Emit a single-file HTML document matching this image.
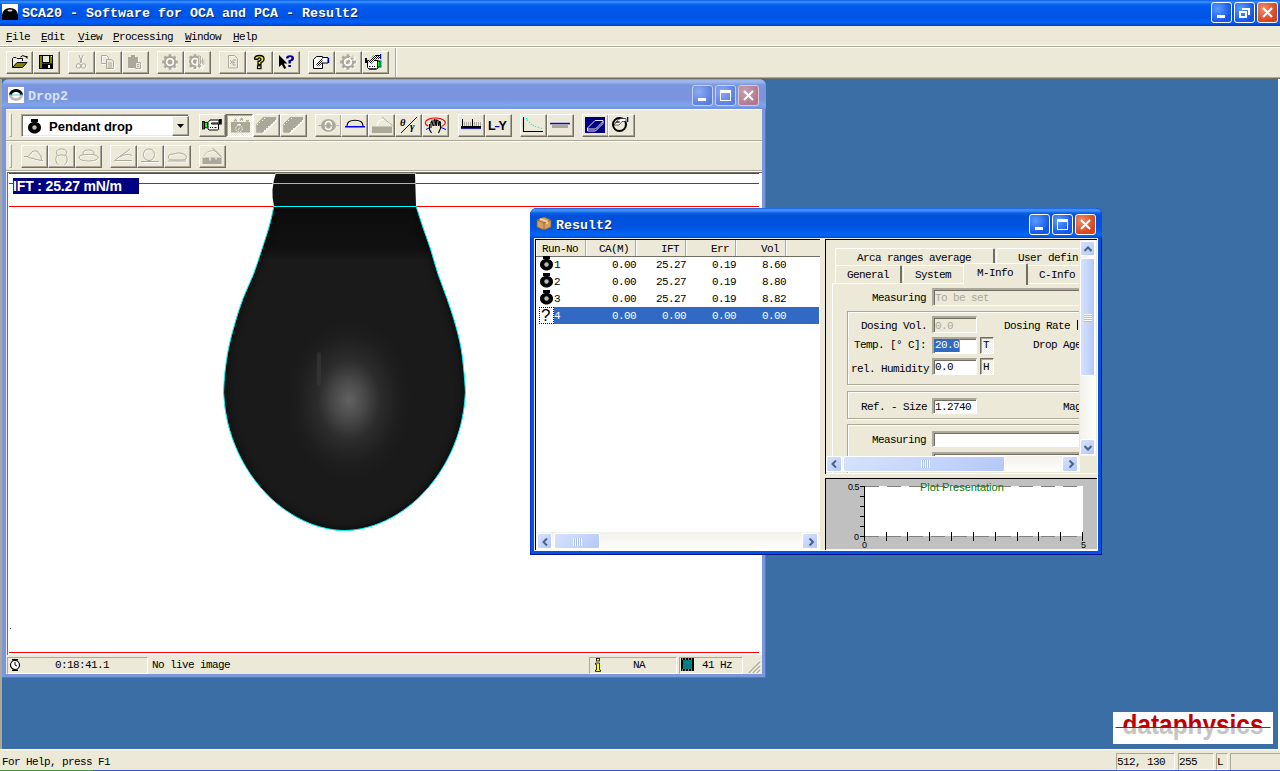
<!DOCTYPE html>
<html><head><meta charset="utf-8">
<style>
*{margin:0;padding:0;box-sizing:border-box}
html,body{width:1280px;height:771px;overflow:hidden;background:#3A6EA5;position:relative;font-family:"Liberation Mono",monospace}
.a{position:absolute}
.mono{font-family:"Liberation Mono",monospace;font-size:11px;letter-spacing:-0.6px;color:#000;white-space:pre}
.sans{font-family:"Liberation Sans",sans-serif}
.btn{position:absolute;width:27px;height:23px;background:#ECE9D8;border-top:1px solid #fff;border-left:1px solid #fff;border-right:1px solid #716F64;border-bottom:1px solid #716F64;box-shadow:inset -1px -1px 0 #ACA899}
.btn svg{position:absolute;left:4px;top:2px}
#title{left:0;top:0;width:1280px;height:26px;background:linear-gradient(#0A5FEA 0px,#3D95FF 2px,#0A64F0 4px,#0058EE 8px,#0054E3 18px,#0062F7 22px,#0050E0 24px,#0040C0 26px)}
.ttext{color:#fff;font-weight:bold;font-size:13.33px;letter-spacing:0;white-space:pre;text-shadow:1px 1px 0 #0A246A}
#menu{left:0;top:26px;width:1280px;height:21px;background:#ECE9D8;border-bottom:1px solid #ACA899;box-shadow:inset 0 -1px 0 #fff}
#tool{left:0;top:47px;width:1280px;height:32px;background:#ECE9D8;border-top:1px solid #fff;border-bottom:1px solid #716F64;box-shadow:inset 0 -1px 0 #ACA899}
.xsb{border:1px solid #fff;border-radius:2px;background:linear-gradient(135deg,#D6E2FC,#C3D4FA 60%,#B4C8F7)}
.wbtn{position:absolute;width:21px;height:21px;border:1px solid #fff;border-radius:3px}
</style></head><body>

<!-- MDI left edge -->
<div class="a" style="left:0;top:79px;width:2px;height:670px;background:#ACA899"></div>

<!-- Main title bar -->
<div id="title" class="a">
  <svg class="a" style="left:2px;top:4px" width="16" height="16" viewBox="0 0 16 16"><rect width="16" height="16" fill="#fff"/><path d="M0 16 L0 11 Q1 4 8 4 Q15 4 16 11 L16 16Z" fill="#000"/><ellipse cx="8" cy="6.5" rx="2.5" ry="1" fill="#ddd"/></svg>
  <div class="a ttext" style="left:22px;top:6px;line-height:16px">SCA20 - Software for OCA and PCA - Result2</div>
  <div class="wbtn" style="left:1211px;top:2px;background:radial-gradient(circle at 30% 30%,#5A9CFF,#1656E6 70%)"><div class="a" style="left:5px;top:12px;width:8px;height:3px;background:#fff"></div></div>
  <div class="wbtn" style="left:1234px;top:2px;background:radial-gradient(circle at 30% 30%,#5A9CFF,#1656E6 70%)"><div class="a" style="left:4px;top:8px;width:8px;height:7px;border:2px solid #fff;border-top-width:2px"></div><div class="a" style="left:7px;top:5px;width:8px;height:7px;border-top:2px solid #fff;border-right:2px solid #fff"></div></div>
  <div class="wbtn" style="left:1257px;top:2px;background:radial-gradient(circle at 30% 30%,#F08A6A,#D8451B 70%)"><svg class="a" style="left:3px;top:3px" width="13" height="13"><path d="M2 2 L11 11 M11 2 L2 11" stroke="#fff" stroke-width="2"/></svg></div>
</div>

<!-- Menu -->
<div id="menu" class="a">
  <div class="a mono" style="left:6px;top:4px;line-height:14px"><u>F</u>ile</div>
  <div class="a mono" style="left:41px;top:4px;line-height:14px"><u>E</u>dit</div>
  <div class="a mono" style="left:78px;top:4px;line-height:14px"><u>V</u>iew</div>
  <div class="a mono" style="left:113px;top:4px;line-height:14px"><u>P</u>rocessing</div>
  <div class="a mono" style="left:185px;top:4px;line-height:14px"><u>W</u>indow</div>
  <div class="a mono" style="left:233px;top:4px;line-height:14px"><u>H</u>elp</div>
</div>

<!-- Toolbar -->
<div id="tool" class="a">
  <div class="btn" style="left:6px;top:3px"></div>
  <div class="btn" style="left:33px;top:3px"></div>
  <div class="btn" style="left:68px;top:3px"><svg width="16" height="16" viewBox="0 0 16 16"><g transform="translate(1 1)" fill="#fff" stroke="#fff"><path d="M6 1 L9 9 M10 1 L7 9" fill="none" stroke-width="1"/><circle cx="5.5" cy="12" r="2.3" fill="none" stroke-width="1"/><circle cx="10.5" cy="12" r="2.3" fill="none" stroke-width="1"/></g><g fill="#ACA899" stroke="#ACA899"><path d="M6 1 L9 9 M10 1 L7 9" fill="none" stroke-width="1"/><circle cx="5.5" cy="12" r="2.3" fill="none" stroke-width="1"/><circle cx="10.5" cy="12" r="2.3" fill="none" stroke-width="1"/></g></svg></div>
  <div class="btn" style="left:95px;top:3px"><svg width="16" height="16" viewBox="0 0 16 16"><g transform="translate(1 1)" fill="#fff" stroke="#fff"><path d="M1.5 1.5 h5 l2 2 v6 h-7z" fill="none" stroke-width="1"/><path d="M6.5 5.5 h5 l2 2 v7 h-7z" fill="#ECE9D8" stroke-width="1"/><path d="M8 9h4M8 11h4M8 13h4" stroke-width="1"/></g><g fill="#ACA899" stroke="#ACA899"><path d="M1.5 1.5 h5 l2 2 v6 h-7z" fill="none" stroke-width="1"/><path d="M6.5 5.5 h5 l2 2 v7 h-7z" fill="#ECE9D8" stroke-width="1"/><path d="M8 9h4M8 11h4M8 13h4" stroke-width="1"/></g></svg></div>
  <div class="btn" style="left:122px;top:3px"><svg width="16" height="16" viewBox="0 0 16 16"><g transform="translate(1 1)" fill="#fff" stroke="#fff"><path d="M1 3 h10 v11 h-10z" stroke="none"/><rect x="4" y="1" width="4" height="2" stroke="none"/><path d="M8.5 8.5 h5 v6 h-5z" fill="#ECE9D8" stroke-width="1"/><path d="M10 10.5h2M10 12.5h2" stroke-width="1"/></g><g fill="#ACA899" stroke="#ACA899"><path d="M1 3 h10 v11 h-10z" stroke="none"/><rect x="4" y="1" width="4" height="2" stroke="none"/><path d="M8.5 8.5 h5 v6 h-5z" fill="#ECE9D8" stroke-width="1"/><path d="M10 10.5h2M10 12.5h2" stroke-width="1"/></g></svg></div>
  <div class="btn" style="left:157px;top:3px"><svg width="16" height="16" viewBox="0 0 16 16"><path d="M13.84 5.92 L14.03 6.55 L15.86 6.50 L15.86 9.50 L14.03 9.45 L13.84 10.08 L13.60 10.66 L13.29 11.24 L14.62 12.50 L12.50 14.62 L11.24 13.29 L10.66 13.60 L10.08 13.84 L9.45 14.03 L9.50 15.86 L6.50 15.86 L6.55 14.03 L5.92 13.84 L5.34 13.60 L4.76 13.29 L3.50 14.62 L1.38 12.50 L2.71 11.24 L2.40 10.66 L2.16 10.08 L1.97 9.45 L0.14 9.50 L0.14 6.50 L1.97 6.55 L2.16 5.92 L2.40 5.34 L2.71 4.76 L1.38 3.50 L3.50 1.38 L4.76 2.71 L5.34 2.40 L5.92 2.16 L6.55 1.97 L6.50 0.14 L9.50 0.14 L9.45 1.97 L10.08 2.16 L10.66 2.40 L11.24 2.71 L12.50 1.38 L14.62 3.50 L13.29 4.76 L13.60 5.34Z" fill="#fff" transform="translate(0.8 0.8)"/><path d="M13.84 5.92 L14.03 6.55 L15.86 6.50 L15.86 9.50 L14.03 9.45 L13.84 10.08 L13.60 10.66 L13.29 11.24 L14.62 12.50 L12.50 14.62 L11.24 13.29 L10.66 13.60 L10.08 13.84 L9.45 14.03 L9.50 15.86 L6.50 15.86 L6.55 14.03 L5.92 13.84 L5.34 13.60 L4.76 13.29 L3.50 14.62 L1.38 12.50 L2.71 11.24 L2.40 10.66 L2.16 10.08 L1.97 9.45 L0.14 9.50 L0.14 6.50 L1.97 6.55 L2.16 5.92 L2.40 5.34 L2.71 4.76 L1.38 3.50 L3.50 1.38 L4.76 2.71 L5.34 2.40 L5.92 2.16 L6.55 1.97 L6.50 0.14 L9.50 0.14 L9.45 1.97 L10.08 2.16 L10.66 2.40 L11.24 2.71 L12.50 1.38 L14.62 3.50 L13.29 4.76 L13.60 5.34Z" fill="#ACA899"/><circle cx="8" cy="8" r="3.3" fill="none" stroke="#fff" stroke-width="1.6"/></svg></div>
  <div class="btn" style="left:184px;top:3px"><svg width="16" height="16" viewBox="0 0 16 16"><g transform="translate(-1.5 0) scale(0.95)"><path d="M13.84 5.92 L14.03 6.55 L15.86 6.50 L15.86 9.50 L14.03 9.45 L13.84 10.08 L13.60 10.66 L13.29 11.24 L14.62 12.50 L12.50 14.62 L11.24 13.29 L10.66 13.60 L10.08 13.84 L9.45 14.03 L9.50 15.86 L6.50 15.86 L6.55 14.03 L5.92 13.84 L5.34 13.60 L4.76 13.29 L3.50 14.62 L1.38 12.50 L2.71 11.24 L2.40 10.66 L2.16 10.08 L1.97 9.45 L0.14 9.50 L0.14 6.50 L1.97 6.55 L2.16 5.92 L2.40 5.34 L2.71 4.76 L1.38 3.50 L3.50 1.38 L4.76 2.71 L5.34 2.40 L5.92 2.16 L6.55 1.97 L6.50 0.14 L9.50 0.14 L9.45 1.97 L10.08 2.16 L10.66 2.40 L11.24 2.71 L12.50 1.38 L14.62 3.50 L13.29 4.76 L13.60 5.34Z" fill="#fff" transform="translate(0.8 0.8)"/><path d="M13.84 5.92 L14.03 6.55 L15.86 6.50 L15.86 9.50 L14.03 9.45 L13.84 10.08 L13.60 10.66 L13.29 11.24 L14.62 12.50 L12.50 14.62 L11.24 13.29 L10.66 13.60 L10.08 13.84 L9.45 14.03 L9.50 15.86 L6.50 15.86 L6.55 14.03 L5.92 13.84 L5.34 13.60 L4.76 13.29 L3.50 14.62 L1.38 12.50 L2.71 11.24 L2.40 10.66 L2.16 10.08 L1.97 9.45 L0.14 9.50 L0.14 6.50 L1.97 6.55 L2.16 5.92 L2.40 5.34 L2.71 4.76 L1.38 3.50 L3.50 1.38 L4.76 2.71 L5.34 2.40 L5.92 2.16 L6.55 1.97 L6.50 0.14 L9.50 0.14 L9.45 1.97 L10.08 2.16 L10.66 2.40 L11.24 2.71 L12.50 1.38 L14.62 3.50 L13.29 4.76 L13.60 5.34Z" fill="#ACA899"/><circle cx="8" cy="8" r="3.3" fill="none" stroke="#fff" stroke-width="1.6"/></g><path d="M8 15 L8 7 M10 10 L10 2 M12 10 L12 2.5 M14 10 L14 4 M15.5 11 L15.5 6 M15.5 11 L13 16" fill="none" stroke="#fff" stroke-width="1.1"/><path d="M9.5 10 L9.5 1.5 M11.5 10 L11.5 2 M13.5 10 L13.5 3.5 M15 11 L15 5.5" fill="none" stroke="#ACA899" stroke-width="0.9"/></svg></div>
  <div class="btn" style="left:219px;top:3px"><svg width="16" height="16" viewBox="0 0 16 16"><path d="M4.5 1.5 h6 l3 3 v9.5 h-9z" fill="none" stroke="#fff" stroke-width="1" transform="translate(0.7 0.7)"/><path d="M4.5 1.5 h6 l3 3 v9.5 h-9z" fill="none" stroke="#ACA899" stroke-width="1"/><path d="M6 6 L8 8 L6 10 M12 6 h-3 v5 h3 M9 8.5h2" fill="none" stroke="#ACA899" stroke-width="1"/></svg></div>
  <div class="btn" style="left:246px;top:3px"><svg width="16" height="16" viewBox="0 0 16 16"><path d="M3.5 5 Q3.5 1.5 8.5 1.5 Q13 1.5 13 5 Q13 7.5 10 8.5 L10 10.5 L7 10.5 L7 7.5 Q10 6.8 10 5 Q10 3.8 8.5 3.8 Q6.8 3.8 6.8 5.5 Z" fill="#FFFF00" stroke="#000" stroke-width="1.3" stroke-linejoin="round"/><rect x="6.5" y="11.8" width="3.5" height="2.8" fill="#FFFF00" stroke="#000" stroke-width="1.2"/></svg></div>
  <div class="btn" style="left:273px;top:3px"><svg width="16" height="16" viewBox="0 0 16 16"><path d="M1 1 L1 13 L3.8 10.5 L6.2 15 L8.2 14 L5.8 9.6 L9.3 9.6 Z" fill="#000"/><path d="M8 4.5 Q8 1.2 12 1.2 Q16 1.2 16 4.2 Q16 6.8 12.8 7.5 L12.8 9.5 L10.5 9.5 L10.5 6.3 Q13.6 5.8 13.6 4.2 Q13.6 3 12 3 Q10.5 3 10.4 4.5 Z" fill="#000090"/><rect x="10.3" y="11" width="2.6" height="2" fill="#000090"/></svg></div>
  <div class="btn" style="left:308px;top:3px"></div>
  <div class="btn" style="left:335px;top:3px"></div>
  <div class="btn" style="left:362px;top:3px"></div>
  <div class="a" style="left:395px;top:0;width:2px;height:29px;background:#ACA899;border-right:1px solid #fff"></div>
</div>


<svg class="a" style="left:0;top:44px" width="400" height="34" viewBox="0 44 400 34"><defs><pattern id="chk" width="2" height="2" patternUnits="userSpaceOnUse"><rect width="2" height="2" fill="#fff"/><rect width="1" height="1" fill="#000"/><rect x="1" y="1" width="1" height="1" fill="#000"/></pattern><pattern id="chky" width="2" height="2" patternUnits="userSpaceOnUse"><rect width="2" height="2" fill="#FFFF00"/><rect width="1" height="1" fill="#fff"/><rect x="1" y="1" width="1" height="1" fill="#fff"/></pattern></defs><path d="M12.5 67.5 V58.5 L13.5 57.5 H16 L17 58.5 H22.5 V61" fill="url(#chky)" stroke="#000" stroke-width="1"/><path d="M12.5 67.5 L17 62.5 H27 L22.5 67.5 Z" fill="#808000" stroke="#000" stroke-width="1"/><path d="M20.5 57 Q22.5 54.5 25.5 56.5" fill="none" stroke="#000" stroke-width="1"/><path d="M24.5 56 H27.5 V59Z" fill="#000"/><rect x="39.5" y="55.5" width="13" height="13" fill="#808000" stroke="#000" stroke-width="1"/><rect x="42.5" y="55.5" width="7" height="7" fill="#ECE9D8" stroke="#000" stroke-width="1"/><rect x="42" y="63.5" width="10" height="5" fill="#000"/><rect x="48" y="65" width="2" height="3" fill="#fff"/><rect x="51" y="56" width="1" height="1" fill="#fff"/><path d="M313.5 68.5 V59.5 L316.5 56.5 H322.5 V68.5Z" fill="#fff" stroke="#000" stroke-width="1"/><path d="M316 64.5 L321 58.5 L322.5 57.5 H328 V63 H322.5 L318.5 66.5Z" fill="url(#chk)" stroke="none"/><path d="M322.5 57.5 H328 V63 H322.5" fill="#fff" stroke="#000" stroke-width="1"/><rect x="328" y="58" width="1.2" height="5" fill="#0000C0"/><g transform="translate(340 54)"><path d="M13.84 5.92 L14.03 6.55 L15.86 6.50 L15.86 9.50 L14.03 9.45 L13.84 10.08 L13.60 10.66 L13.29 11.24 L14.62 12.50 L12.50 14.62 L11.24 13.29 L10.66 13.60 L10.08 13.84 L9.45 14.03 L9.50 15.86 L6.50 15.86 L6.55 14.03 L5.92 13.84 L5.34 13.60 L4.76 13.29 L3.50 14.62 L1.38 12.50 L2.71 11.24 L2.40 10.66 L2.16 10.08 L1.97 9.45 L0.14 9.50 L0.14 6.50 L1.97 6.55 L2.16 5.92 L2.40 5.34 L2.71 4.76 L1.38 3.50 L3.50 1.38 L4.76 2.71 L5.34 2.40 L5.92 2.16 L6.55 1.97 L6.50 0.14 L9.50 0.14 L9.45 1.97 L10.08 2.16 L10.66 2.40 L11.24 2.71 L12.50 1.38 L14.62 3.50 L13.29 4.76 L13.60 5.34Z" fill="#fff" transform="translate(0.8 0.8)"/><path d="M13.84 5.92 L14.03 6.55 L15.86 6.50 L15.86 9.50 L14.03 9.45 L13.84 10.08 L13.60 10.66 L13.29 11.24 L14.62 12.50 L12.50 14.62 L11.24 13.29 L10.66 13.60 L10.08 13.84 L9.45 14.03 L9.50 15.86 L6.50 15.86 L6.55 14.03 L5.92 13.84 L5.34 13.60 L4.76 13.29 L3.50 14.62 L1.38 12.50 L2.71 11.24 L2.40 10.66 L2.16 10.08 L1.97 9.45 L0.14 9.50 L0.14 6.50 L1.97 6.55 L2.16 5.92 L2.40 5.34 L2.71 4.76 L1.38 3.50 L3.50 1.38 L4.76 2.71 L5.34 2.40 L5.92 2.16 L6.55 1.97 L6.50 0.14 L9.50 0.14 L9.45 1.97 L10.08 2.16 L10.66 2.40 L11.24 2.71 L12.50 1.38 L14.62 3.50 L13.29 4.76 L13.60 5.34Z" fill="#ACA899"/><circle cx="8" cy="8" r="3.3" fill="none" stroke="#fff" stroke-width="1.6"/><path d="M4 10 L9 4 L11 3 H15 V6 H12 L8 11" fill="none" stroke="#fff" stroke-width="0.9"/></g><path d="M367.5 60.5 H378 V68 L377 69 H369 L367.5 67.5Z" fill="#fff" stroke="#000" stroke-width="1"/><rect x="365" y="58" width="2" height="5" fill="#000"/><rect x="377.5" y="61" width="2.5" height="6" fill="#00FF00" stroke="#000" stroke-width="0.8"/><rect x="380" y="60.5" width="1.5" height="7" fill="#008080"/><path d="M368 62 L373 56 L375 55 H380 V59 H376 L371 64Z" fill="url(#chk)"/><path d="M375 55.5 H380" stroke="#000"/><rect x="380" y="54" width="1.2" height="5" fill="#0000C0"/><rect x="369" y="66" width="1.5" height="1" fill="#0000C0"/><rect x="372" y="66" width="1" height="1" fill="#000"/><rect x="374" y="66" width="1" height="1" fill="#000"/><rect x="369" y="68.5" width="7" height="1" fill="#000"/></svg>
<!-- Drop2 window -->
<div class="a" id="drop2" style="left:2px;top:79px;width:764px;height:599px;background:#7A96DF;border-radius:7px 7px 0 0;box-shadow:inset -1px -1px 0 #5A6FD0">
  <div class="a" style="left:0;top:0;width:764px;height:30px;border-radius:7px 7px 0 0;background:linear-gradient(#6B8DE0 0px,#9DB6EC 1px,#9DB6EC 3px,#7A96DF 6px,#7A93DF 20px,#7EA6E9 26px,#7190E0 30px)"></div>
  <svg class="a" style="left:6px;top:8px" width="16" height="16" viewBox="0 0 16 16"><rect width="16" height="16" fill="#fff"/><path d="M1 8 A7 6 0 0 1 15 8 L12 8 A4 3 0 0 0 4 8Z" fill="#000"/><path d="M1 8 A7 6 0 0 0 15 8 L12 8 A4 3 0 0 1 4 8Z" fill="#bbb"/><rect x="1" y="7.5" width="14" height="1" fill="#5cc"/></svg>
  <div class="a ttext" style="left:26px;top:10px;line-height:16px;color:#D8E4F8;text-shadow:none">Drop2</div>
  <div class="wbtn" style="left:690px;top:6px;border-color:#C6D3F7;background:radial-gradient(circle at 30% 30%,#8CAAF0,#5A7EE0 75%)"><div class="a" style="left:5px;top:12px;width:8px;height:3px;background:#fff"></div></div>
  <div class="wbtn" style="left:713px;top:6px;border-color:#C6D3F7;background:radial-gradient(circle at 30% 30%,#8CAAF0,#5A7EE0 75%)"><div class="a" style="left:4px;top:4px;width:11px;height:11px;border:1px solid #fff;border-top:3px solid #fff"></div></div>
  <div class="wbtn" style="left:736px;top:6px;border-color:#E0C8D0;background:radial-gradient(circle at 30% 30%,#C8A0B0,#B07890 75%)"><svg class="a" style="left:3px;top:3px" width="13" height="13"><path d="M2 2 L11 11 M11 2 L2 11" stroke="#fff" stroke-width="2"/></svg></div>
  <!-- client -->
  <div class="a" style="left:4px;top:30px;width:756px;height:565px;background:#ECE9D8">
    <!-- toolbar band 1 -->
    <div class="a" style="left:0;top:0;width:756px;height:1px;background:#fff"></div>
    <div class="a" style="left:3px;top:4px;width:3px;height:24px;border-left:1px solid #fff;border-top:1px solid #fff;border-right:1px solid #ACA899;border-bottom:1px solid #ACA899"></div>
    <div class="a" style="left:0;top:31px;width:756px;height:1px;background:#ACA899;border-bottom:1px solid #fff;box-sizing:content-box"></div>
    <div class="a" style="left:3px;top:35px;width:3px;height:24px;border-left:1px solid #fff;border-top:1px solid #fff;border-right:1px solid #ACA899;border-bottom:1px solid #ACA899"></div>
    <div class="a" style="left:0;top:61px;width:756px;height:1px;background:#ACA899;border-bottom:1px solid #fff;box-sizing:content-box"></div>
    <!-- image area -->
    <div class="a" style="left:1px;top:63px;width:755px;height:483px;background:#fff;border-left:1px solid #716F64;border-top:1px solid #716F64;overflow:hidden" id="img">
    </div>
  </div>
</div>



<!-- Drop2 toolbars -->
<div class="a" style="left:21px;top:114px;width:168px;height:23px;background:#fff;border-top:1px solid #ACA899;border-left:1px solid #ACA899;border-right:1px solid #fff;border-bottom:1px solid #fff;box-shadow:inset 1px 1px 0 #716F64,inset -1px -1px 0 #ECE9D8"></div><svg class="a" style="left:28px;top:119px" width="13" height="15" viewBox="0 0 13 15"><rect x="3" y="0" width="7" height="3" fill="#000"/><path d="M6.5 3 C2 3 0 5.5 0 8.5 C0 12 3 14.5 6.5 14.5 C10 14.5 13 12 13 8.5 C13 5.5 11 3 6.5 3Z" fill="#000"/><circle cx="6.5" cy="8.5" r="2.2" fill="#bbb"/></svg><div class="a sans" style="left:49px;top:119px;font-size:13px;font-weight:bold;line-height:16px;color:#000">Pendant drop</div><div class="btn" style="left:172px;top:116px;width:17px;height:20px"><svg style="left:4px;top:7px" width="8" height="5" viewBox="0 0 8 5"><path d="M0 0 h7 L3.5 4z" fill="#000"/></svg></div><div class="btn" style="left:199px;top:114px"></div><div class="btn" style="left:226px;top:114px;border-top:1px solid #716F64;border-left:1px solid #716F64;border-right:1px solid #fff;border-bottom:1px solid #fff;box-shadow:inset 1px 1px 0 #ACA899;background:repeating-conic-gradient(#fff 0 25%,#ECE9D8 0 50%) 0 0/2px 2px"></div><div class="btn" style="left:253px;top:114px"></div><div class="btn" style="left:280px;top:114px"></div><div class="btn" style="left:315px;top:114px"></div><div class="btn" style="left:341px;top:114px"></div><div class="btn" style="left:368px;top:114px"></div><div class="btn" style="left:395px;top:114px"></div><div class="btn" style="left:422px;top:114px"></div><div class="btn" style="left:458px;top:114px"></div><div class="btn" style="left:485px;top:114px"></div><div class="btn" style="left:520px;top:114px"></div><div class="btn" style="left:547px;top:114px"></div><div class="btn" style="left:582px;top:114px"></div><div class="btn" style="left:608px;top:114px"></div><div class="btn" style="left:21px;top:145px"></div><div class="btn" style="left:48px;top:145px"></div><div class="btn" style="left:75px;top:145px"></div><div class="btn" style="left:110px;top:145px"></div><div class="btn" style="left:137px;top:145px"></div><div class="btn" style="left:164px;top:145px"></div><div class="btn" style="left:199px;top:145px"></div>
<svg class="a" style="left:310px;top:112px" width="330" height="26" viewBox="310 112 330 26"><path d="M318.5 125.5 h3 M335.5 125.5 h3" stroke="#ACA899"/><ellipse cx="329" cy="126" rx="7.5" ry="6.5" fill="#fff"/><ellipse cx="328.5" cy="125.5" rx="7.5" ry="6.5" fill="#ACA899"/><rect x="325.5" y="121.5" width="6" height="8" rx="3" fill="none" stroke="#fff" stroke-width="1.4"/><rect x="325" y="125" width="7" height="1.3" fill="#ACA899"/><path d="M347 126 C347 122 350.5 120.3 355 120.3 C359.5 120.3 363 122 363 126" fill="none" stroke="#000" stroke-width="1.1"/><rect x="345" y="126" width="20" height="1.5" fill="#0000FF"/><rect x="372" y="126.5" width="20" height="6.5" fill="#ACA899"/><path d="M377 126 C377 122 380 119.5 383.5 119.5 C387 119.5 389.5 122 389.5 126" fill="none" stroke="#fff" stroke-width="1.1"/><path d="M382 117 L392.5 125.5" stroke="#ACA899" stroke-width="1"/><text x="400" y="125.5" font-family="Liberation Serif" font-style="italic" font-weight="bold" font-size="10.5" fill="#000">&#952;</text><text x="410" y="130" font-family="Liberation Serif" font-style="italic" font-weight="bold" font-size="11" fill="#000">&#947;</text><path d="M401 133 L417 117" stroke="#000080" stroke-width="1"/><path d="M428 126 A10 4.8 0 1 1 441.5 126.5" fill="none" stroke="#F00" stroke-width="1.1"/><path d="M426 129.5 L429 128 M441 127.5 L446 129.5" stroke="#00F" stroke-width="1"/><path d="M429.5 124 L429.5 129.5 L431.5 133 M431 128 L431 122.5 L432 121 L433 126 M434 126 L434 120 L435 119.5 L436 126 M436.5 126 L436.5 120 L438 120.5 L438.5 126 M439 126 L439.5 121.5 L440.5 122 L440.5 128.5 L438.5 133" fill="none" stroke="#000" stroke-width="1.1"/><rect x="461" y="126" width="20" height="2.2" fill="#000"/><rect x="461" y="128.2" width="20" height="0.9" fill="#000080"/><rect x="462" y="119" width="1" height="7" fill="#000"/><rect x="472" y="119" width="1" height="7" fill="#000"/><rect x="464" y="122" width="1" height="4" fill="#ACA899"/><rect x="466" y="122" width="1" height="4" fill="#ACA899"/><rect x="468" y="122" width="1" height="4" fill="#ACA899"/><rect x="470" y="122" width="1" height="4" fill="#ACA899"/><rect x="474" y="122" width="1" height="4" fill="#ACA899"/><rect x="476" y="122" width="1" height="4" fill="#ACA899"/><rect x="478" y="122" width="1" height="4" fill="#ACA899"/><rect x="480" y="122" width="1" height="4" fill="#ACA899"/><text x="488" y="130" font-family="Liberation Sans" font-weight="bold" font-size="12.5" fill="#000">L</text><rect x="495" y="126" width="4.5" height="1.2" fill="#0000C0"/><text x="498.5" y="130" font-family="Liberation Sans" font-weight="bold" font-size="12.5" fill="#000">Y</text><path d="M523.5 117 V131.5 H543" fill="none" stroke="#000" stroke-width="1.1"/><rect x="525.9" y="117.9" width="1.2" height="1.2" fill="#00FFFF"/><rect x="526.9" y="119.9" width="1.2" height="1.2" fill="#00FFFF"/><rect x="528.9" y="121.9" width="1.2" height="1.2" fill="#00FFFF"/><rect x="530.9" y="123.9" width="1.2" height="1.2" fill="#00FFFF"/><rect x="532.9" y="124.9" width="1.2" height="1.2" fill="#00FFFF"/><rect x="534.9" y="125.9" width="1.2" height="1.2" fill="#00FFFF"/><rect x="537.9" y="126.9" width="1.2" height="1.2" fill="#00FFFF"/><rect x="540.9" y="127.9" width="1.2" height="1.2" fill="#00FFFF"/><rect x="550" y="122.8" width="20" height="1.5" fill="#0000FF"/><rect x="552" y="124.5" width="16" height="3.5" fill="#ACA899"/><rect x="585" y="117" width="20" height="16" fill="#000080"/><path d="M587.5 128 L595 120.5 H603 V121.5 L595.5 129 H587.5Z M587.5 128 V131 H595.5 L603 123.5 V121.5" fill="none" stroke="#FFF" stroke-width="0.9"/><circle cx="619.5" cy="124.5" r="6.5" fill="none" stroke="#000" stroke-width="2"/><path d="M614 125 L618.5 119.5 L621 118.5 H626 V121.5 H622 L619 125Z" fill="#fff" stroke="#000" stroke-width="0.6"/><path d="M615.5 122 l1 1 l1 -1 l1 1 l1 -1 M616.5 121 l1 1 l1 -1 l1 1" stroke="#000" stroke-width="0.8" fill="none"/><rect x="627" y="117" width="1.3" height="5" fill="#0000C0"/></svg>
<svg class="a" style="left:197px;top:112px" width="112" height="26" viewBox="197 112 112 26"><rect x="202.5" y="121.5" width="2" height="7.5" fill="#008080" stroke="#000" stroke-width="0.8"/><rect x="204.5" y="122.3" width="3" height="5.5" fill="#00FF00" stroke="#000" stroke-width="0.8"/><path d="M208 122.5 L210 120 H219 V123 H211.5 L211.5 124 H218.5 V129.5 L217.5 130 H209 L208 129 Z" fill="#fff" stroke="#000" stroke-width="1"/><rect x="219" y="119" width="2.8" height="5.5" fill="#000"/><rect x="210" y="127" width="1" height="1" fill="#000"/><rect x="212" y="127" width="1" height="1" fill="#000"/><rect x="214.5" y="127" width="2" height="1" fill="#000080"/><path d="M231 122 H250 V132.5 H231Z" fill="#ACA899"/><path d="M234 121.5 L235.5 119.5 L237 121.5 M240 120.5 L241.5 118.5 L243 120.5 M246 120 L247.5 121.5 L249 120" stroke="#ACA899" stroke-width="1.3" fill="none"/><circle cx="239" cy="128.5" r="3.3" fill="none" stroke="#fff" stroke-width="1" stroke-dasharray="1.5 1"/><rect x="237.5" y="124" width="3.5" height="1.3" fill="#fff"/><path d="M238 130 L240 127.5" stroke="#fff" stroke-width="0.8"/><path d="M263.0 133.5 L276.5 120.5" stroke="#fff" stroke-width="1.2"/><path d="M256.2 124.2 L263.2 117.0 L276.0 117.0 L276.0 120.2 L262.5 132.8 L256.2 132.8Z" fill="#ACA899"/><rect x="257" y="124" width="1" height="1" fill="#fff"/><rect x="259" y="122" width="1" height="1" fill="#fff"/><rect x="262" y="120" width="1" height="1" fill="#fff"/><rect x="264" y="118" width="1" height="1" fill="#fff"/><rect x="264" y="130" width="1" height="1" fill="#fff"/><rect x="266" y="128" width="1" height="1" fill="#fff"/><rect x="268" y="126" width="1" height="1" fill="#fff"/><rect x="271" y="124" width="1" height="1" fill="#fff"/><rect x="273" y="122" width="1" height="1" fill="#fff"/><rect x="275" y="120" width="1" height="1" fill="#fff"/><path d="M290.0 133.5 L303.5 120.5" stroke="#fff" stroke-width="1.2"/><path d="M283.2 124.2 L290.2 117.0 L303.0 117.0 L303.0 120.2 L289.5 132.8 L283.2 132.8Z" fill="#ACA899"/><rect x="284" y="124" width="1" height="1" fill="#fff"/><rect x="286" y="122" width="1" height="1" fill="#fff"/><rect x="288" y="120" width="1" height="1" fill="#fff"/><rect x="291" y="118" width="1" height="1" fill="#fff"/><rect x="291" y="130" width="1" height="1" fill="#fff"/><rect x="293" y="128" width="1" height="1" fill="#fff"/><rect x="296" y="126" width="1" height="1" fill="#fff"/><rect x="298" y="124" width="1" height="1" fill="#fff"/><rect x="300" y="122" width="1" height="1" fill="#fff"/><rect x="302" y="120" width="1" height="1" fill="#fff"/></svg>
<svg class="a" style="left:18px;top:142px" width="212" height="28" viewBox="18 142 212 28"><path d="M24 156.5 H28 L33 151 H37 L41 156 L41.5 160.5 H43 M28 157 L30 158 L33 158.5 L36 159.5 L39 160 L41 160.5" fill="none" stroke="#fff" stroke-width="1" transform="translate(0.8 0.8)"/><path d="M24 156.5 H28 L33 151 H37 L41 156 L41.5 160.5 H43 M28 157 L30 158 L33 158.5 L36 159.5 L39 160 L41 160.5" fill="none" stroke="#ACA899" stroke-width="1"/><path d="M57.5 155 C55 152 57 149 61.5 149 C66 149 68 152 65.5 155 M57.5 155 C54.5 158 56 164 58.5 164.5 M65.5 155 C68.5 158 67 164 64.5 164.5 M58 156 C60 154.5 63 154.5 65 156" fill="none" stroke="#fff" stroke-width="1" transform="translate(0.8 0.8)"/><path d="M57.5 155 C55 152 57 149 61.5 149 C66 149 68 152 65.5 155 M57.5 155 C54.5 158 56 164 58.5 164.5 M65.5 155 C68.5 158 67 164 64.5 164.5 M58 156 C60 154.5 63 154.5 65 156" fill="none" stroke="#ACA899" stroke-width="1"/><path d="M83.5 154.5 C82 151 85 150 88.5 150 C92 150 95 151 93.5 154.5 M79 157.5 C79 155 84 154.5 88.5 154.5 C93 154.5 98 155 98 157.5 C98 160 93 161 88.5 161 C84 161 79 160 79 157.5Z" fill="none" stroke="#fff" stroke-width="1" transform="translate(0.8 0.8)"/><path d="M83.5 154.5 C82 151 85 150 88.5 150 C92 150 95 151 93.5 154.5 M79 157.5 C79 155 84 154.5 88.5 154.5 C93 154.5 98 155 98 157.5 C98 160 93 161 88.5 161 C84 161 79 160 79 157.5Z" fill="none" stroke="#ACA899" stroke-width="1"/><path d="M114.5 160.5 H132 M114.5 160.5 L130 149 M120 157 C123 155 126 154.5 128.5 154.5 C130.5 154.5 132 155.5 132 156" fill="none" stroke="#fff" stroke-width="1" transform="translate(0.8 0.8)"/><path d="M114.5 160.5 H132 M114.5 160.5 L130 149 M120 157 C123 155 126 154.5 128.5 154.5 C130.5 154.5 132 155.5 132 156" fill="none" stroke="#ACA899" stroke-width="1"/><path d="M143.5 154.5 C143.5 151 146 149 149 149 C152 149 154.5 151 154.5 154.5 C154.5 158 152 160.5 149 160.5 C146 160.5 143.5 158 143.5 154.5Z M141 161.5 H159" fill="none" stroke="#fff" stroke-width="1" transform="translate(0.8 0.8)"/><path d="M143.5 154.5 C143.5 151 146 149 149 149 C152 149 154.5 151 154.5 154.5 C154.5 158 152 160.5 149 160.5 C146 160.5 143.5 158 143.5 154.5Z M141 161.5 H159" fill="none" stroke="#ACA899" stroke-width="1"/><path d="M168.5 157 C168.5 154.5 171 154 174 154 C176 153 179 152.5 182 153.5 C185 154 186.5 155.5 186.5 157.5 C186.5 159.5 184 160 181 160 H173 C170 160 168.5 159.5 168.5 157Z M168 161 H186" fill="none" stroke="#fff" stroke-width="1" transform="translate(0.8 0.8)"/><path d="M168.5 157 C168.5 154.5 171 154 174 154 C176 153 179 152.5 182 153.5 C185 154 186.5 155.5 186.5 157.5 C186.5 159.5 184 160 181 160 H173 C170 160 168.5 159.5 168.5 157Z M168 161 H186" fill="none" stroke="#ACA899" stroke-width="1"/><rect x="202.5" y="157.5" width="19" height="6.5" fill="#ACA899"/><path d="M204 157.5 C205 153.5 209 151.5 213 151.5 C216 151.5 219.5 154 221 157.5" fill="none" stroke="#fff" stroke-width="1.2"/><path d="M204 157.5 C205 153.5 209 151.5 213 151.5 C216 151.5 219.5 154 221 157.5" fill="none" stroke="#ACA899" stroke-width="0.8" transform="translate(0 -0.8)"/><path d="M212.5 148 L221.5 157.5" stroke="#ACA899" stroke-width="1"/><path d="M210 157.5 V160.5 M216 157.5 V159.5" stroke="#fff" stroke-width="1.2"/></svg>
<!-- drop image -->
<svg class="a" style="left:8px;top:173px" width="753" height="482" viewBox="8 173 753 482">
  <defs>
    <radialGradient id="hl" cx="349" cy="400" r="80" gradientUnits="userSpaceOnUse" gradientTransform="translate(349 400) scale(0.78 1.0) translate(-349 -400)">
      <stop offset="0" stop-color="#626262"/>
      <stop offset="0.22" stop-color="#4C4C4C"/>
      <stop offset="0.5" stop-color="#2C2C2C"/>
      <stop offset="0.8" stop-color="#1E1E1E"/>
      <stop offset="1" stop-color="#1A1A1A"/>
    </radialGradient>
    <linearGradient id="topdark" x1="0" y1="206" x2="0" y2="262" gradientUnits="userSpaceOnUse">
      <stop offset="0" stop-color="#0C0C0C" stop-opacity="1"/>
      <stop offset="0.75" stop-color="#0E0E0E" stop-opacity="0.8"/>
      <stop offset="1" stop-color="#111" stop-opacity="0"/>
    </linearGradient>
  </defs>
  <rect x="9" y="173" width="750" height="1" fill="#F00"/>
  <rect x="9" y="183" width="750" height="1" fill="#F00"/>
  <rect x="9" y="206" width="750" height="1" fill="#F00"/>
  <rect x="9" y="652" width="750" height="1" fill="#F00"/>
  <path d="M276 173 L415 173 L416 206 L274 206 Q270 190 276 173Z" fill="#121212"/>
  <path d="M274.0 206.0 C273.3 209.1 271.7 217.4 269.7 224.6 C267.7 231.8 264.7 240.8 262.0 249.0 C259.3 257.2 256.7 265.7 253.5 274.0 C250.3 282.3 246.1 290.4 243.0 298.6 C239.9 306.8 237.4 314.8 235.0 323.0 C232.6 331.2 230.3 339.6 228.6 347.9 C226.9 356.1 225.7 365.5 224.9 372.5 C224.1 379.5 223.9 386.0 223.7 390.0 C223.5 394.0 223.8 394.1 223.9 396.3 C224.0 398.5 224.2 400.8 224.4 403.0 C224.6 405.3 224.9 407.6 225.3 409.9 C225.6 412.2 226.0 414.6 226.5 416.9 C226.9 419.2 227.5 421.5 228.0 423.9 C228.6 426.2 229.2 428.5 229.9 430.8 C230.6 433.1 231.3 435.4 232.1 437.7 C232.9 440.0 233.8 442.3 234.7 444.5 C235.6 446.8 236.5 449.0 237.5 451.2 C238.5 453.4 239.6 455.6 240.7 457.7 C241.8 459.9 242.9 462.0 244.1 464.1 C245.3 466.2 246.6 468.3 247.9 470.3 C249.1 472.3 250.5 474.3 251.9 476.3 C253.2 478.2 254.7 480.2 256.1 482.0 C257.6 483.9 259.1 485.8 260.6 487.6 C262.2 489.3 263.7 491.1 265.4 492.8 C267.0 494.5 268.6 496.1 270.3 497.7 C272.0 499.4 273.7 500.9 275.5 502.4 C277.2 503.9 279.0 505.4 280.8 506.7 C282.6 508.1 284.4 509.5 286.3 510.8 C288.1 512.0 290.0 513.3 291.9 514.4 C293.8 515.6 295.7 516.7 297.6 517.7 C299.6 518.8 301.5 519.8 303.5 520.7 C305.4 521.6 307.4 522.5 309.4 523.3 C311.4 524.1 313.4 524.8 315.4 525.5 C317.4 526.1 319.4 526.7 321.4 527.3 C323.4 527.8 325.4 528.3 327.4 528.7 C329.3 529.1 331.3 529.4 333.3 529.7 C335.2 530.0 337.2 530.2 339.1 530.3 C341.0 530.4 342.7 530.5 344.5 530.5 C346.3 530.5 348.0 530.4 349.9 530.3 C351.8 530.2 353.8 530.0 355.7 529.7 C357.7 529.4 359.7 529.1 361.6 528.7 C363.6 528.3 365.6 527.8 367.6 527.3 C369.6 526.7 371.6 526.1 373.6 525.5 C375.6 524.8 377.6 524.1 379.6 523.3 C381.6 522.5 383.6 521.6 385.5 520.7 C387.5 519.8 389.4 518.8 391.4 517.7 C393.3 516.7 395.2 515.6 397.1 514.4 C399.0 513.3 400.9 512.0 402.7 510.8 C404.6 509.5 406.4 508.1 408.2 506.7 C410.0 505.4 411.8 503.9 413.5 502.4 C415.3 500.9 417.0 499.4 418.7 497.7 C420.4 496.1 422.0 494.5 423.6 492.8 C425.3 491.1 426.8 489.3 428.4 487.6 C429.9 485.8 431.4 483.9 432.9 482.0 C434.3 480.2 435.8 478.2 437.1 476.3 C438.5 474.3 439.9 472.3 441.1 470.3 C442.4 468.3 443.7 466.2 444.9 464.1 C446.1 462.0 447.2 459.9 448.3 457.7 C449.4 455.6 450.5 453.4 451.5 451.2 C452.5 449.0 453.4 446.8 454.3 444.5 C455.2 442.3 456.1 440.0 456.9 437.7 C457.7 435.4 458.4 433.1 459.1 430.8 C459.8 428.5 460.4 426.2 461.0 423.9 C461.5 421.5 462.1 419.2 462.5 416.9 C463.0 414.6 463.4 412.2 463.7 409.9 C464.1 407.6 464.4 405.3 464.6 403.0 C464.8 400.8 465.0 398.5 465.1 396.3 C465.2 394.1 465.5 394.0 465.3 390.0 C465.1 386.0 464.7 379.5 464.0 372.5 C463.3 365.5 462.5 356.1 461.0 347.9 C459.5 339.6 457.3 331.2 455.0 323.0 C452.7 314.8 449.8 306.8 447.0 298.6 C444.2 290.4 440.8 282.3 438.0 274.0 C435.2 265.7 433.2 257.2 430.5 249.0 C427.8 240.8 424.4 231.8 422.0 224.6 C419.6 217.4 417.0 209.1 416.0 206.0Z" fill="url(#hl)"/>
  <path d="M274.0 206.0 C273.3 209.1 271.7 217.4 269.7 224.6 C267.7 231.8 264.7 240.8 262.0 249.0 C259.3 257.2 256.7 265.7 253.5 274.0 C250.3 282.3 246.1 290.4 243.0 298.6 C239.9 306.8 237.4 314.8 235.0 323.0 C232.6 331.2 230.3 339.6 228.6 347.9 C226.9 356.1 225.7 365.5 224.9 372.5 C224.1 379.5 223.9 386.0 223.7 390.0 C223.5 394.0 223.8 394.1 223.9 396.3 C224.0 398.5 224.2 400.8 224.4 403.0 C224.6 405.3 224.9 407.6 225.3 409.9 C225.6 412.2 226.0 414.6 226.5 416.9 C226.9 419.2 227.5 421.5 228.0 423.9 C228.6 426.2 229.2 428.5 229.9 430.8 C230.6 433.1 231.3 435.4 232.1 437.7 C232.9 440.0 233.8 442.3 234.7 444.5 C235.6 446.8 236.5 449.0 237.5 451.2 C238.5 453.4 239.6 455.6 240.7 457.7 C241.8 459.9 242.9 462.0 244.1 464.1 C245.3 466.2 246.6 468.3 247.9 470.3 C249.1 472.3 250.5 474.3 251.9 476.3 C253.2 478.2 254.7 480.2 256.1 482.0 C257.6 483.9 259.1 485.8 260.6 487.6 C262.2 489.3 263.7 491.1 265.4 492.8 C267.0 494.5 268.6 496.1 270.3 497.7 C272.0 499.4 273.7 500.9 275.5 502.4 C277.2 503.9 279.0 505.4 280.8 506.7 C282.6 508.1 284.4 509.5 286.3 510.8 C288.1 512.0 290.0 513.3 291.9 514.4 C293.8 515.6 295.7 516.7 297.6 517.7 C299.6 518.8 301.5 519.8 303.5 520.7 C305.4 521.6 307.4 522.5 309.4 523.3 C311.4 524.1 313.4 524.8 315.4 525.5 C317.4 526.1 319.4 526.7 321.4 527.3 C323.4 527.8 325.4 528.3 327.4 528.7 C329.3 529.1 331.3 529.4 333.3 529.7 C335.2 530.0 337.2 530.2 339.1 530.3 C341.0 530.4 342.7 530.5 344.5 530.5 C346.3 530.5 348.0 530.4 349.9 530.3 C351.8 530.2 353.8 530.0 355.7 529.7 C357.7 529.4 359.7 529.1 361.6 528.7 C363.6 528.3 365.6 527.8 367.6 527.3 C369.6 526.7 371.6 526.1 373.6 525.5 C375.6 524.8 377.6 524.1 379.6 523.3 C381.6 522.5 383.6 521.6 385.5 520.7 C387.5 519.8 389.4 518.8 391.4 517.7 C393.3 516.7 395.2 515.6 397.1 514.4 C399.0 513.3 400.9 512.0 402.7 510.8 C404.6 509.5 406.4 508.1 408.2 506.7 C410.0 505.4 411.8 503.9 413.5 502.4 C415.3 500.9 417.0 499.4 418.7 497.7 C420.4 496.1 422.0 494.5 423.6 492.8 C425.3 491.1 426.8 489.3 428.4 487.6 C429.9 485.8 431.4 483.9 432.9 482.0 C434.3 480.2 435.8 478.2 437.1 476.3 C438.5 474.3 439.9 472.3 441.1 470.3 C442.4 468.3 443.7 466.2 444.9 464.1 C446.1 462.0 447.2 459.9 448.3 457.7 C449.4 455.6 450.5 453.4 451.5 451.2 C452.5 449.0 453.4 446.8 454.3 444.5 C455.2 442.3 456.1 440.0 456.9 437.7 C457.7 435.4 458.4 433.1 459.1 430.8 C459.8 428.5 460.4 426.2 461.0 423.9 C461.5 421.5 462.1 419.2 462.5 416.9 C463.0 414.6 463.4 412.2 463.7 409.9 C464.1 407.6 464.4 405.3 464.6 403.0 C464.8 400.8 465.0 398.5 465.1 396.3 C465.2 394.1 465.5 394.0 465.3 390.0 C465.1 386.0 464.7 379.5 464.0 372.5 C463.3 365.5 462.5 356.1 461.0 347.9 C459.5 339.6 457.3 331.2 455.0 323.0 C452.7 314.8 449.8 306.8 447.0 298.6 C444.2 290.4 440.8 282.3 438.0 274.0 C435.2 265.7 433.2 257.2 430.5 249.0 C427.8 240.8 424.4 231.8 422.0 224.6 C419.6 217.4 417.0 209.1 416.0 206.0Z" fill="url(#topdark)"/>
  <clipPath id="dclip"><path d="M274.0 206.0 C273.3 209.1 271.7 217.4 269.7 224.6 C267.7 231.8 264.7 240.8 262.0 249.0 C259.3 257.2 256.7 265.7 253.5 274.0 C250.3 282.3 246.1 290.4 243.0 298.6 C239.9 306.8 237.4 314.8 235.0 323.0 C232.6 331.2 230.3 339.6 228.6 347.9 C226.9 356.1 225.7 365.5 224.9 372.5 C224.1 379.5 223.9 386.0 223.7 390.0 C223.5 394.0 223.8 394.1 223.9 396.3 C224.0 398.5 224.2 400.8 224.4 403.0 C224.6 405.3 224.9 407.6 225.3 409.9 C225.6 412.2 226.0 414.6 226.5 416.9 C226.9 419.2 227.5 421.5 228.0 423.9 C228.6 426.2 229.2 428.5 229.9 430.8 C230.6 433.1 231.3 435.4 232.1 437.7 C232.9 440.0 233.8 442.3 234.7 444.5 C235.6 446.8 236.5 449.0 237.5 451.2 C238.5 453.4 239.6 455.6 240.7 457.7 C241.8 459.9 242.9 462.0 244.1 464.1 C245.3 466.2 246.6 468.3 247.9 470.3 C249.1 472.3 250.5 474.3 251.9 476.3 C253.2 478.2 254.7 480.2 256.1 482.0 C257.6 483.9 259.1 485.8 260.6 487.6 C262.2 489.3 263.7 491.1 265.4 492.8 C267.0 494.5 268.6 496.1 270.3 497.7 C272.0 499.4 273.7 500.9 275.5 502.4 C277.2 503.9 279.0 505.4 280.8 506.7 C282.6 508.1 284.4 509.5 286.3 510.8 C288.1 512.0 290.0 513.3 291.9 514.4 C293.8 515.6 295.7 516.7 297.6 517.7 C299.6 518.8 301.5 519.8 303.5 520.7 C305.4 521.6 307.4 522.5 309.4 523.3 C311.4 524.1 313.4 524.8 315.4 525.5 C317.4 526.1 319.4 526.7 321.4 527.3 C323.4 527.8 325.4 528.3 327.4 528.7 C329.3 529.1 331.3 529.4 333.3 529.7 C335.2 530.0 337.2 530.2 339.1 530.3 C341.0 530.4 342.7 530.5 344.5 530.5 C346.3 530.5 348.0 530.4 349.9 530.3 C351.8 530.2 353.8 530.0 355.7 529.7 C357.7 529.4 359.7 529.1 361.6 528.7 C363.6 528.3 365.6 527.8 367.6 527.3 C369.6 526.7 371.6 526.1 373.6 525.5 C375.6 524.8 377.6 524.1 379.6 523.3 C381.6 522.5 383.6 521.6 385.5 520.7 C387.5 519.8 389.4 518.8 391.4 517.7 C393.3 516.7 395.2 515.6 397.1 514.4 C399.0 513.3 400.9 512.0 402.7 510.8 C404.6 509.5 406.4 508.1 408.2 506.7 C410.0 505.4 411.8 503.9 413.5 502.4 C415.3 500.9 417.0 499.4 418.7 497.7 C420.4 496.1 422.0 494.5 423.6 492.8 C425.3 491.1 426.8 489.3 428.4 487.6 C429.9 485.8 431.4 483.9 432.9 482.0 C434.3 480.2 435.8 478.2 437.1 476.3 C438.5 474.3 439.9 472.3 441.1 470.3 C442.4 468.3 443.7 466.2 444.9 464.1 C446.1 462.0 447.2 459.9 448.3 457.7 C449.4 455.6 450.5 453.4 451.5 451.2 C452.5 449.0 453.4 446.8 454.3 444.5 C455.2 442.3 456.1 440.0 456.9 437.7 C457.7 435.4 458.4 433.1 459.1 430.8 C459.8 428.5 460.4 426.2 461.0 423.9 C461.5 421.5 462.1 419.2 462.5 416.9 C463.0 414.6 463.4 412.2 463.7 409.9 C464.1 407.6 464.4 405.3 464.6 403.0 C464.8 400.8 465.0 398.5 465.1 396.3 C465.2 394.1 465.5 394.0 465.3 390.0 C465.1 386.0 464.7 379.5 464.0 372.5 C463.3 365.5 462.5 356.1 461.0 347.9 C459.5 339.6 457.3 331.2 455.0 323.0 C452.7 314.8 449.8 306.8 447.0 298.6 C444.2 290.4 440.8 282.3 438.0 274.0 C435.2 265.7 433.2 257.2 430.5 249.0 C427.8 240.8 424.4 231.8 422.0 224.6 C419.6 217.4 417.0 209.1 416.0 206.0Z"/></clipPath><g clip-path="url(#dclip)" fill="none" stroke="#080808"><path d="M274.0 206.0 C273.3 209.1 271.7 217.4 269.7 224.6 C267.7 231.8 264.7 240.8 262.0 249.0 C259.3 257.2 256.7 265.7 253.5 274.0 C250.3 282.3 246.1 290.4 243.0 298.6 C239.9 306.8 237.4 314.8 235.0 323.0 C232.6 331.2 230.3 339.6 228.6 347.9 C226.9 356.1 225.7 365.5 224.9 372.5 C224.1 379.5 223.9 386.0 223.7 390.0 C223.5 394.0 223.8 394.1 223.9 396.3 C224.0 398.5 224.2 400.8 224.4 403.0 C224.6 405.3 224.9 407.6 225.3 409.9 C225.6 412.2 226.0 414.6 226.5 416.9 C226.9 419.2 227.5 421.5 228.0 423.9 C228.6 426.2 229.2 428.5 229.9 430.8 C230.6 433.1 231.3 435.4 232.1 437.7 C232.9 440.0 233.8 442.3 234.7 444.5 C235.6 446.8 236.5 449.0 237.5 451.2 C238.5 453.4 239.6 455.6 240.7 457.7 C241.8 459.9 242.9 462.0 244.1 464.1 C245.3 466.2 246.6 468.3 247.9 470.3 C249.1 472.3 250.5 474.3 251.9 476.3 C253.2 478.2 254.7 480.2 256.1 482.0 C257.6 483.9 259.1 485.8 260.6 487.6 C262.2 489.3 263.7 491.1 265.4 492.8 C267.0 494.5 268.6 496.1 270.3 497.7 C272.0 499.4 273.7 500.9 275.5 502.4 C277.2 503.9 279.0 505.4 280.8 506.7 C282.6 508.1 284.4 509.5 286.3 510.8 C288.1 512.0 290.0 513.3 291.9 514.4 C293.8 515.6 295.7 516.7 297.6 517.7 C299.6 518.8 301.5 519.8 303.5 520.7 C305.4 521.6 307.4 522.5 309.4 523.3 C311.4 524.1 313.4 524.8 315.4 525.5 C317.4 526.1 319.4 526.7 321.4 527.3 C323.4 527.8 325.4 528.3 327.4 528.7 C329.3 529.1 331.3 529.4 333.3 529.7 C335.2 530.0 337.2 530.2 339.1 530.3 C341.0 530.4 342.7 530.5 344.5 530.5 C346.3 530.5 348.0 530.4 349.9 530.3 C351.8 530.2 353.8 530.0 355.7 529.7 C357.7 529.4 359.7 529.1 361.6 528.7 C363.6 528.3 365.6 527.8 367.6 527.3 C369.6 526.7 371.6 526.1 373.6 525.5 C375.6 524.8 377.6 524.1 379.6 523.3 C381.6 522.5 383.6 521.6 385.5 520.7 C387.5 519.8 389.4 518.8 391.4 517.7 C393.3 516.7 395.2 515.6 397.1 514.4 C399.0 513.3 400.9 512.0 402.7 510.8 C404.6 509.5 406.4 508.1 408.2 506.7 C410.0 505.4 411.8 503.9 413.5 502.4 C415.3 500.9 417.0 499.4 418.7 497.7 C420.4 496.1 422.0 494.5 423.6 492.8 C425.3 491.1 426.8 489.3 428.4 487.6 C429.9 485.8 431.4 483.9 432.9 482.0 C434.3 480.2 435.8 478.2 437.1 476.3 C438.5 474.3 439.9 472.3 441.1 470.3 C442.4 468.3 443.7 466.2 444.9 464.1 C446.1 462.0 447.2 459.9 448.3 457.7 C449.4 455.6 450.5 453.4 451.5 451.2 C452.5 449.0 453.4 446.8 454.3 444.5 C455.2 442.3 456.1 440.0 456.9 437.7 C457.7 435.4 458.4 433.1 459.1 430.8 C459.8 428.5 460.4 426.2 461.0 423.9 C461.5 421.5 462.1 419.2 462.5 416.9 C463.0 414.6 463.4 412.2 463.7 409.9 C464.1 407.6 464.4 405.3 464.6 403.0 C464.8 400.8 465.0 398.5 465.1 396.3 C465.2 394.1 465.5 394.0 465.3 390.0 C465.1 386.0 464.7 379.5 464.0 372.5 C463.3 365.5 462.5 356.1 461.0 347.9 C459.5 339.6 457.3 331.2 455.0 323.0 C452.7 314.8 449.8 306.8 447.0 298.6 C444.2 290.4 440.8 282.3 438.0 274.0 C435.2 265.7 433.2 257.2 430.5 249.0 C427.8 240.8 424.4 231.8 422.0 224.6 C419.6 217.4 417.0 209.1 416.0 206.0Z" stroke-width="4" opacity="0.18"/><path d="M274.0 206.0 C273.3 209.1 271.7 217.4 269.7 224.6 C267.7 231.8 264.7 240.8 262.0 249.0 C259.3 257.2 256.7 265.7 253.5 274.0 C250.3 282.3 246.1 290.4 243.0 298.6 C239.9 306.8 237.4 314.8 235.0 323.0 C232.6 331.2 230.3 339.6 228.6 347.9 C226.9 356.1 225.7 365.5 224.9 372.5 C224.1 379.5 223.9 386.0 223.7 390.0 C223.5 394.0 223.8 394.1 223.9 396.3 C224.0 398.5 224.2 400.8 224.4 403.0 C224.6 405.3 224.9 407.6 225.3 409.9 C225.6 412.2 226.0 414.6 226.5 416.9 C226.9 419.2 227.5 421.5 228.0 423.9 C228.6 426.2 229.2 428.5 229.9 430.8 C230.6 433.1 231.3 435.4 232.1 437.7 C232.9 440.0 233.8 442.3 234.7 444.5 C235.6 446.8 236.5 449.0 237.5 451.2 C238.5 453.4 239.6 455.6 240.7 457.7 C241.8 459.9 242.9 462.0 244.1 464.1 C245.3 466.2 246.6 468.3 247.9 470.3 C249.1 472.3 250.5 474.3 251.9 476.3 C253.2 478.2 254.7 480.2 256.1 482.0 C257.6 483.9 259.1 485.8 260.6 487.6 C262.2 489.3 263.7 491.1 265.4 492.8 C267.0 494.5 268.6 496.1 270.3 497.7 C272.0 499.4 273.7 500.9 275.5 502.4 C277.2 503.9 279.0 505.4 280.8 506.7 C282.6 508.1 284.4 509.5 286.3 510.8 C288.1 512.0 290.0 513.3 291.9 514.4 C293.8 515.6 295.7 516.7 297.6 517.7 C299.6 518.8 301.5 519.8 303.5 520.7 C305.4 521.6 307.4 522.5 309.4 523.3 C311.4 524.1 313.4 524.8 315.4 525.5 C317.4 526.1 319.4 526.7 321.4 527.3 C323.4 527.8 325.4 528.3 327.4 528.7 C329.3 529.1 331.3 529.4 333.3 529.7 C335.2 530.0 337.2 530.2 339.1 530.3 C341.0 530.4 342.7 530.5 344.5 530.5 C346.3 530.5 348.0 530.4 349.9 530.3 C351.8 530.2 353.8 530.0 355.7 529.7 C357.7 529.4 359.7 529.1 361.6 528.7 C363.6 528.3 365.6 527.8 367.6 527.3 C369.6 526.7 371.6 526.1 373.6 525.5 C375.6 524.8 377.6 524.1 379.6 523.3 C381.6 522.5 383.6 521.6 385.5 520.7 C387.5 519.8 389.4 518.8 391.4 517.7 C393.3 516.7 395.2 515.6 397.1 514.4 C399.0 513.3 400.9 512.0 402.7 510.8 C404.6 509.5 406.4 508.1 408.2 506.7 C410.0 505.4 411.8 503.9 413.5 502.4 C415.3 500.9 417.0 499.4 418.7 497.7 C420.4 496.1 422.0 494.5 423.6 492.8 C425.3 491.1 426.8 489.3 428.4 487.6 C429.9 485.8 431.4 483.9 432.9 482.0 C434.3 480.2 435.8 478.2 437.1 476.3 C438.5 474.3 439.9 472.3 441.1 470.3 C442.4 468.3 443.7 466.2 444.9 464.1 C446.1 462.0 447.2 459.9 448.3 457.7 C449.4 455.6 450.5 453.4 451.5 451.2 C452.5 449.0 453.4 446.8 454.3 444.5 C455.2 442.3 456.1 440.0 456.9 437.7 C457.7 435.4 458.4 433.1 459.1 430.8 C459.8 428.5 460.4 426.2 461.0 423.9 C461.5 421.5 462.1 419.2 462.5 416.9 C463.0 414.6 463.4 412.2 463.7 409.9 C464.1 407.6 464.4 405.3 464.6 403.0 C464.8 400.8 465.0 398.5 465.1 396.3 C465.2 394.1 465.5 394.0 465.3 390.0 C465.1 386.0 464.7 379.5 464.0 372.5 C463.3 365.5 462.5 356.1 461.0 347.9 C459.5 339.6 457.3 331.2 455.0 323.0 C452.7 314.8 449.8 306.8 447.0 298.6 C444.2 290.4 440.8 282.3 438.0 274.0 C435.2 265.7 433.2 257.2 430.5 249.0 C427.8 240.8 424.4 231.8 422.0 224.6 C419.6 217.4 417.0 209.1 416.0 206.0Z" stroke-width="8" opacity="0.14"/><path d="M274.0 206.0 C273.3 209.1 271.7 217.4 269.7 224.6 C267.7 231.8 264.7 240.8 262.0 249.0 C259.3 257.2 256.7 265.7 253.5 274.0 C250.3 282.3 246.1 290.4 243.0 298.6 C239.9 306.8 237.4 314.8 235.0 323.0 C232.6 331.2 230.3 339.6 228.6 347.9 C226.9 356.1 225.7 365.5 224.9 372.5 C224.1 379.5 223.9 386.0 223.7 390.0 C223.5 394.0 223.8 394.1 223.9 396.3 C224.0 398.5 224.2 400.8 224.4 403.0 C224.6 405.3 224.9 407.6 225.3 409.9 C225.6 412.2 226.0 414.6 226.5 416.9 C226.9 419.2 227.5 421.5 228.0 423.9 C228.6 426.2 229.2 428.5 229.9 430.8 C230.6 433.1 231.3 435.4 232.1 437.7 C232.9 440.0 233.8 442.3 234.7 444.5 C235.6 446.8 236.5 449.0 237.5 451.2 C238.5 453.4 239.6 455.6 240.7 457.7 C241.8 459.9 242.9 462.0 244.1 464.1 C245.3 466.2 246.6 468.3 247.9 470.3 C249.1 472.3 250.5 474.3 251.9 476.3 C253.2 478.2 254.7 480.2 256.1 482.0 C257.6 483.9 259.1 485.8 260.6 487.6 C262.2 489.3 263.7 491.1 265.4 492.8 C267.0 494.5 268.6 496.1 270.3 497.7 C272.0 499.4 273.7 500.9 275.5 502.4 C277.2 503.9 279.0 505.4 280.8 506.7 C282.6 508.1 284.4 509.5 286.3 510.8 C288.1 512.0 290.0 513.3 291.9 514.4 C293.8 515.6 295.7 516.7 297.6 517.7 C299.6 518.8 301.5 519.8 303.5 520.7 C305.4 521.6 307.4 522.5 309.4 523.3 C311.4 524.1 313.4 524.8 315.4 525.5 C317.4 526.1 319.4 526.7 321.4 527.3 C323.4 527.8 325.4 528.3 327.4 528.7 C329.3 529.1 331.3 529.4 333.3 529.7 C335.2 530.0 337.2 530.2 339.1 530.3 C341.0 530.4 342.7 530.5 344.5 530.5 C346.3 530.5 348.0 530.4 349.9 530.3 C351.8 530.2 353.8 530.0 355.7 529.7 C357.7 529.4 359.7 529.1 361.6 528.7 C363.6 528.3 365.6 527.8 367.6 527.3 C369.6 526.7 371.6 526.1 373.6 525.5 C375.6 524.8 377.6 524.1 379.6 523.3 C381.6 522.5 383.6 521.6 385.5 520.7 C387.5 519.8 389.4 518.8 391.4 517.7 C393.3 516.7 395.2 515.6 397.1 514.4 C399.0 513.3 400.9 512.0 402.7 510.8 C404.6 509.5 406.4 508.1 408.2 506.7 C410.0 505.4 411.8 503.9 413.5 502.4 C415.3 500.9 417.0 499.4 418.7 497.7 C420.4 496.1 422.0 494.5 423.6 492.8 C425.3 491.1 426.8 489.3 428.4 487.6 C429.9 485.8 431.4 483.9 432.9 482.0 C434.3 480.2 435.8 478.2 437.1 476.3 C438.5 474.3 439.9 472.3 441.1 470.3 C442.4 468.3 443.7 466.2 444.9 464.1 C446.1 462.0 447.2 459.9 448.3 457.7 C449.4 455.6 450.5 453.4 451.5 451.2 C452.5 449.0 453.4 446.8 454.3 444.5 C455.2 442.3 456.1 440.0 456.9 437.7 C457.7 435.4 458.4 433.1 459.1 430.8 C459.8 428.5 460.4 426.2 461.0 423.9 C461.5 421.5 462.1 419.2 462.5 416.9 C463.0 414.6 463.4 412.2 463.7 409.9 C464.1 407.6 464.4 405.3 464.6 403.0 C464.8 400.8 465.0 398.5 465.1 396.3 C465.2 394.1 465.5 394.0 465.3 390.0 C465.1 386.0 464.7 379.5 464.0 372.5 C463.3 365.5 462.5 356.1 461.0 347.9 C459.5 339.6 457.3 331.2 455.0 323.0 C452.7 314.8 449.8 306.8 447.0 298.6 C444.2 290.4 440.8 282.3 438.0 274.0 C435.2 265.7 433.2 257.2 430.5 249.0 C427.8 240.8 424.4 231.8 422.0 224.6 C419.6 217.4 417.0 209.1 416.0 206.0Z" stroke-width="13" opacity="0.10"/><path d="M274.0 206.0 C273.3 209.1 271.7 217.4 269.7 224.6 C267.7 231.8 264.7 240.8 262.0 249.0 C259.3 257.2 256.7 265.7 253.5 274.0 C250.3 282.3 246.1 290.4 243.0 298.6 C239.9 306.8 237.4 314.8 235.0 323.0 C232.6 331.2 230.3 339.6 228.6 347.9 C226.9 356.1 225.7 365.5 224.9 372.5 C224.1 379.5 223.9 386.0 223.7 390.0 C223.5 394.0 223.8 394.1 223.9 396.3 C224.0 398.5 224.2 400.8 224.4 403.0 C224.6 405.3 224.9 407.6 225.3 409.9 C225.6 412.2 226.0 414.6 226.5 416.9 C226.9 419.2 227.5 421.5 228.0 423.9 C228.6 426.2 229.2 428.5 229.9 430.8 C230.6 433.1 231.3 435.4 232.1 437.7 C232.9 440.0 233.8 442.3 234.7 444.5 C235.6 446.8 236.5 449.0 237.5 451.2 C238.5 453.4 239.6 455.6 240.7 457.7 C241.8 459.9 242.9 462.0 244.1 464.1 C245.3 466.2 246.6 468.3 247.9 470.3 C249.1 472.3 250.5 474.3 251.9 476.3 C253.2 478.2 254.7 480.2 256.1 482.0 C257.6 483.9 259.1 485.8 260.6 487.6 C262.2 489.3 263.7 491.1 265.4 492.8 C267.0 494.5 268.6 496.1 270.3 497.7 C272.0 499.4 273.7 500.9 275.5 502.4 C277.2 503.9 279.0 505.4 280.8 506.7 C282.6 508.1 284.4 509.5 286.3 510.8 C288.1 512.0 290.0 513.3 291.9 514.4 C293.8 515.6 295.7 516.7 297.6 517.7 C299.6 518.8 301.5 519.8 303.5 520.7 C305.4 521.6 307.4 522.5 309.4 523.3 C311.4 524.1 313.4 524.8 315.4 525.5 C317.4 526.1 319.4 526.7 321.4 527.3 C323.4 527.8 325.4 528.3 327.4 528.7 C329.3 529.1 331.3 529.4 333.3 529.7 C335.2 530.0 337.2 530.2 339.1 530.3 C341.0 530.4 342.7 530.5 344.5 530.5 C346.3 530.5 348.0 530.4 349.9 530.3 C351.8 530.2 353.8 530.0 355.7 529.7 C357.7 529.4 359.7 529.1 361.6 528.7 C363.6 528.3 365.6 527.8 367.6 527.3 C369.6 526.7 371.6 526.1 373.6 525.5 C375.6 524.8 377.6 524.1 379.6 523.3 C381.6 522.5 383.6 521.6 385.5 520.7 C387.5 519.8 389.4 518.8 391.4 517.7 C393.3 516.7 395.2 515.6 397.1 514.4 C399.0 513.3 400.9 512.0 402.7 510.8 C404.6 509.5 406.4 508.1 408.2 506.7 C410.0 505.4 411.8 503.9 413.5 502.4 C415.3 500.9 417.0 499.4 418.7 497.7 C420.4 496.1 422.0 494.5 423.6 492.8 C425.3 491.1 426.8 489.3 428.4 487.6 C429.9 485.8 431.4 483.9 432.9 482.0 C434.3 480.2 435.8 478.2 437.1 476.3 C438.5 474.3 439.9 472.3 441.1 470.3 C442.4 468.3 443.7 466.2 444.9 464.1 C446.1 462.0 447.2 459.9 448.3 457.7 C449.4 455.6 450.5 453.4 451.5 451.2 C452.5 449.0 453.4 446.8 454.3 444.5 C455.2 442.3 456.1 440.0 456.9 437.7 C457.7 435.4 458.4 433.1 459.1 430.8 C459.8 428.5 460.4 426.2 461.0 423.9 C461.5 421.5 462.1 419.2 462.5 416.9 C463.0 414.6 463.4 412.2 463.7 409.9 C464.1 407.6 464.4 405.3 464.6 403.0 C464.8 400.8 465.0 398.5 465.1 396.3 C465.2 394.1 465.5 394.0 465.3 390.0 C465.1 386.0 464.7 379.5 464.0 372.5 C463.3 365.5 462.5 356.1 461.0 347.9 C459.5 339.6 457.3 331.2 455.0 323.0 C452.7 314.8 449.8 306.8 447.0 298.6 C444.2 290.4 440.8 282.3 438.0 274.0 C435.2 265.7 433.2 257.2 430.5 249.0 C427.8 240.8 424.4 231.8 422.0 224.6 C419.6 217.4 417.0 209.1 416.0 206.0Z" stroke-width="20" opacity="0.07"/></g><rect x="317" y="352" width="4" height="34" rx="2" fill="#3A3A3A" opacity="0.6"/>
  <path d="M274.0 206.0 C273.3 209.1 271.7 217.4 269.7 224.6 C267.7 231.8 264.7 240.8 262.0 249.0 C259.3 257.2 256.7 265.7 253.5 274.0 C250.3 282.3 246.1 290.4 243.0 298.6 C239.9 306.8 237.4 314.8 235.0 323.0 C232.6 331.2 230.3 339.6 228.6 347.9 C226.9 356.1 225.7 365.5 224.9 372.5 C224.1 379.5 223.9 386.0 223.7 390.0 C223.5 394.0 223.8 394.1 223.9 396.3 C224.0 398.5 224.2 400.8 224.4 403.0 C224.6 405.3 224.9 407.6 225.3 409.9 C225.6 412.2 226.0 414.6 226.5 416.9 C226.9 419.2 227.5 421.5 228.0 423.9 C228.6 426.2 229.2 428.5 229.9 430.8 C230.6 433.1 231.3 435.4 232.1 437.7 C232.9 440.0 233.8 442.3 234.7 444.5 C235.6 446.8 236.5 449.0 237.5 451.2 C238.5 453.4 239.6 455.6 240.7 457.7 C241.8 459.9 242.9 462.0 244.1 464.1 C245.3 466.2 246.6 468.3 247.9 470.3 C249.1 472.3 250.5 474.3 251.9 476.3 C253.2 478.2 254.7 480.2 256.1 482.0 C257.6 483.9 259.1 485.8 260.6 487.6 C262.2 489.3 263.7 491.1 265.4 492.8 C267.0 494.5 268.6 496.1 270.3 497.7 C272.0 499.4 273.7 500.9 275.5 502.4 C277.2 503.9 279.0 505.4 280.8 506.7 C282.6 508.1 284.4 509.5 286.3 510.8 C288.1 512.0 290.0 513.3 291.9 514.4 C293.8 515.6 295.7 516.7 297.6 517.7 C299.6 518.8 301.5 519.8 303.5 520.7 C305.4 521.6 307.4 522.5 309.4 523.3 C311.4 524.1 313.4 524.8 315.4 525.5 C317.4 526.1 319.4 526.7 321.4 527.3 C323.4 527.8 325.4 528.3 327.4 528.7 C329.3 529.1 331.3 529.4 333.3 529.7 C335.2 530.0 337.2 530.2 339.1 530.3 C341.0 530.4 342.7 530.5 344.5 530.5 C346.3 530.5 348.0 530.4 349.9 530.3 C351.8 530.2 353.8 530.0 355.7 529.7 C357.7 529.4 359.7 529.1 361.6 528.7 C363.6 528.3 365.6 527.8 367.6 527.3 C369.6 526.7 371.6 526.1 373.6 525.5 C375.6 524.8 377.6 524.1 379.6 523.3 C381.6 522.5 383.6 521.6 385.5 520.7 C387.5 519.8 389.4 518.8 391.4 517.7 C393.3 516.7 395.2 515.6 397.1 514.4 C399.0 513.3 400.9 512.0 402.7 510.8 C404.6 509.5 406.4 508.1 408.2 506.7 C410.0 505.4 411.8 503.9 413.5 502.4 C415.3 500.9 417.0 499.4 418.7 497.7 C420.4 496.1 422.0 494.5 423.6 492.8 C425.3 491.1 426.8 489.3 428.4 487.6 C429.9 485.8 431.4 483.9 432.9 482.0 C434.3 480.2 435.8 478.2 437.1 476.3 C438.5 474.3 439.9 472.3 441.1 470.3 C442.4 468.3 443.7 466.2 444.9 464.1 C446.1 462.0 447.2 459.9 448.3 457.7 C449.4 455.6 450.5 453.4 451.5 451.2 C452.5 449.0 453.4 446.8 454.3 444.5 C455.2 442.3 456.1 440.0 456.9 437.7 C457.7 435.4 458.4 433.1 459.1 430.8 C459.8 428.5 460.4 426.2 461.0 423.9 C461.5 421.5 462.1 419.2 462.5 416.9 C463.0 414.6 463.4 412.2 463.7 409.9 C464.1 407.6 464.4 405.3 464.6 403.0 C464.8 400.8 465.0 398.5 465.1 396.3 C465.2 394.1 465.5 394.0 465.3 390.0 C465.1 386.0 464.7 379.5 464.0 372.5 C463.3 365.5 462.5 356.1 461.0 347.9 C459.5 339.6 457.3 331.2 455.0 323.0 C452.7 314.8 449.8 306.8 447.0 298.6 C444.2 290.4 440.8 282.3 438.0 274.0 C435.2 265.7 433.2 257.2 430.5 249.0 C427.8 240.8 424.4 231.8 422.0 224.6 C419.6 217.4 417.0 209.1 416.0 206.0" fill="none" stroke="#0FF" stroke-width="1"/>
  <rect x="275" y="173" width="141" height="1" fill="#0FF"/>
  <rect x="272" y="183" width="144" height="1" fill="#0FF"/>
  <rect x="274" y="206" width="142" height="1" fill="#0FF"/>
  <rect x="10" y="628" width="1" height="1" fill="#444"/>
</svg>
<div class="a sans" style="left:13px;top:178px;width:126px;height:16px;background:#000080;color:#fff;font-size:14px;font-weight:bold;letter-spacing:-0.15px;line-height:17px;padding-left:0;white-space:pre">IFT : 25.27 mN/m</div>



<!-- Drop2 status bar -->
<div class="a" style="left:7px;top:657px;width:141px;height:17px;border-top:1px solid #ACA899;border-left:1px solid #ACA899;border-right:1px solid #fff;border-bottom:1px solid #fff"></div>
<svg class="a" style="left:9px;top:658px" width="12" height="14" viewBox="0 0 12 14"><circle cx="6" cy="7" r="4.5" fill="#fff" stroke="#000" stroke-width="1.2"/><path d="M6 4 L6 7 L8 8" stroke="#000" stroke-width="1" fill="none"/><rect x="3" y="1" width="6" height="1.5" fill="#000"/><rect x="3" y="11.5" width="6" height="1.5" fill="#000"/></svg>
<div class="a mono" style="left:55px;top:658px;line-height:14px">0:18:41.1</div>
<div class="a mono" style="left:152px;top:658px;line-height:14px">No live image</div>
<div class="a" style="left:589px;top:657px;width:88px;height:17px;border-top:1px solid #ACA899;border-left:1px solid #ACA899;border-right:1px solid #fff;border-bottom:1px solid #fff"></div>
<svg class="a" style="left:595px;top:658px" width="6" height="14" viewBox="0 0 6 14"><rect x="1.5" y="0.5" width="3" height="2.5" fill="#FF0" stroke="#000" stroke-width="0.8"/><path d="M0.5 5 L4.5 5 L4.5 12 L5.5 12 L5.5 13.5 L0.5 13.5 L0.5 12 L1.5 12 L1.5 6.5 L0.5 6.5Z" fill="#FF0" stroke="#000" stroke-width="0.8"/></svg>
<div class="a mono" style="left:633px;top:658px;line-height:14px">NA</div>
<div class="a" style="left:679px;top:657px;width:64px;height:17px;border-top:1px solid #ACA899;border-left:1px solid #ACA899;border-right:1px solid #fff;border-bottom:1px solid #fff"></div>
<svg class="a" style="left:681px;top:658px" width="13" height="13" viewBox="0 0 13 13"><rect x="0" y="0" width="13" height="13" fill="#000"/><rect x="2" y="2" width="9" height="9" fill="#008080"/><rect x="1" y="0.5" width="1" height="1" fill="#fff"/><rect x="4" y="0.5" width="1" height="1" fill="#fff"/><rect x="7" y="0.5" width="1" height="1" fill="#fff"/><rect x="10" y="0.5" width="1" height="1" fill="#fff"/><rect x="1" y="11.5" width="1" height="1" fill="#fff"/><rect x="4" y="11.5" width="1" height="1" fill="#fff"/><rect x="7" y="11.5" width="1" height="1" fill="#fff"/><rect x="10" y="11.5" width="1" height="1" fill="#fff"/></svg>
<div class="a mono" style="left:702px;top:658px;line-height:14px">41 Hz</div>
<svg class="a" style="left:748px;top:661px" width="13" height="12" viewBox="0 0 13 12"><path d="M12 1 L1 12 M12 5 L5 12 M12 9 L9 12" stroke="#ACA899" stroke-width="1.5"/><path d="M12.8 1.8 L1.8 12.8 M12.8 5.8 L5.8 12.8 M12.8 9.8 L9.8 12.8" stroke="#fff" stroke-width="1"/></svg>

<!-- Result2 window -->
<div class="a" style="left:530px;top:208px;width:572px;height:347px;background:#0054E3;border-radius:7px 7px 0 0;box-shadow:inset 0 -1px 0 #00138C,inset -1px 0 0 #00138C,inset 1px 0 0 #0831D9">
  <div class="a" style="left:0;top:0;width:572px;height:30px;border-radius:7px 7px 0 0;background:linear-gradient(#0A48D8 0px,#3D8EF5 1px,#3D8EF5 3px,#0B5FE6 5px,#0050DA 8px,#0054E3 20px,#0066F5 26px,#0060F0 28px,#0042C8 30px)"></div>
  <svg class="a" style="left:6px;top:7px" width="16" height="16" viewBox="0 0 16 16"><path d="M1 5 L8 2 L15 5 L15 12 L8 15 L1 12Z" fill="#D8A060" stroke="#8A5A20" stroke-width="0.8"/><path d="M1 5 L8 8 L15 5 M8 8 L8 15" stroke="#8A5A20" stroke-width="0.8" fill="none"/><path d="M4 3.7 L11 6.5 L11 9" stroke="#F0D8B0" stroke-width="1.5" fill="none"/></svg>
  <div class="a ttext" style="left:26px;top:10px;line-height:16px">Result2</div>
  <div class="wbtn" style="left:499px;top:6px;background:radial-gradient(circle at 30% 30%,#5A9CFF,#1656E6 70%)"><div class="a" style="left:5px;top:12px;width:8px;height:3px;background:#fff"></div></div>
  <div class="wbtn" style="left:522px;top:6px;background:radial-gradient(circle at 30% 30%,#5A9CFF,#1656E6 70%)"><div class="a" style="left:4px;top:4px;width:11px;height:11px;border:1px solid #fff;border-top:3px solid #fff"></div></div>
  <div class="wbtn" style="left:545px;top:6px;background:radial-gradient(circle at 30% 30%,#F08A6A,#D8451B 70%)"><svg class="a" style="left:3px;top:3px" width="13" height="13"><path d="M2 2 L11 11 M11 2 L2 11" stroke="#fff" stroke-width="2"/></svg></div>
  <!-- client -->
  <div class="a" style="left:4px;top:30px;width:564px;height:313px;background:#ECE9D8;border-right:1px solid #fff;border-bottom:1px solid #fff">
    <!-- list -->
    <div class="a" style="left:1px;top:1px;width:285px;height:311px;background:#fff;border-left:1px solid #000;border-top:1px solid #000;overflow:hidden">
      <div class="a" style="left:0;top:0;width:300px;height:16px;border-top:1px solid #fff;box-sizing:border-box"></div>
      <div class="a mono" style="left:0px;top:0;width:50px;height:16px;background:#ECE9D8;border-left:1px solid #fff;border-right:1px solid #ACA899;box-shadow:1px 0 0 #716F64;text-align:left;padding-left:5px;line-height:18px">Run-No</div><div class="a mono" style="left:50px;top:0;width:50px;height:16px;background:#ECE9D8;border-left:1px solid #fff;border-right:1px solid #ACA899;box-shadow:1px 0 0 #716F64;text-align:right;padding-right:6px;line-height:18px">CA(M)</div><div class="a mono" style="left:100px;top:0;width:50px;height:16px;background:#ECE9D8;border-left:1px solid #fff;border-right:1px solid #ACA899;box-shadow:1px 0 0 #716F64;text-align:right;padding-right:6px;line-height:18px">IFT</div><div class="a mono" style="left:150px;top:0;width:50px;height:16px;background:#ECE9D8;border-left:1px solid #fff;border-right:1px solid #ACA899;box-shadow:1px 0 0 #716F64;text-align:right;padding-right:6px;line-height:18px">Err</div><div class="a mono" style="left:200px;top:0;width:50px;height:16px;background:#ECE9D8;border-left:1px solid #fff;border-right:1px solid #ACA899;box-shadow:1px 0 0 #716F64;text-align:right;padding-right:6px;line-height:18px">Vol</div><div class="a mono" style="left:250px;top:0;width:40px;height:16px;background:#ECE9D8;border-left:1px solid #fff;border-right:1px solid #ACA899;box-shadow:1px 0 0 #716F64;text-align:left;padding-left:5px;line-height:16px"></div>
      <div class="a" style="left:0;top:16px;width:285px;height:1px;background:#716F64"></div>
      <svg class="a" style="left:4px;top:16px" width="13" height="15" viewBox="0 0 13 15"><rect x="3" y="0" width="7" height="3" fill="#000"/><path d="M6.5 3 C2 3 0 5.5 0 8.5 C0 12 3 14.5 6.5 14.5 C10 14.5 13 12 13 8.5 C13 5.5 11 3 6.5 3Z" fill="#000"/><circle cx="6.5" cy="8.5" r="2.2" fill="#bbb"/></svg><div class="a mono" style="left:18px;top:18px;line-height:14px">1</div><div class="a mono" style="left:40px;top:18px;width:60px;text-align:right;line-height:14px">0.00</div><div class="a mono" style="left:90px;top:18px;width:60px;text-align:right;line-height:14px">25.27</div><div class="a mono" style="left:140px;top:18px;width:60px;text-align:right;line-height:14px">0.19</div><div class="a mono" style="left:190px;top:18px;width:60px;text-align:right;line-height:14px">8.60</div><svg class="a" style="left:4px;top:33px" width="13" height="15" viewBox="0 0 13 15"><rect x="3" y="0" width="7" height="3" fill="#000"/><path d="M6.5 3 C2 3 0 5.5 0 8.5 C0 12 3 14.5 6.5 14.5 C10 14.5 13 12 13 8.5 C13 5.5 11 3 6.5 3Z" fill="#000"/><circle cx="6.5" cy="8.5" r="2.2" fill="#bbb"/></svg><div class="a mono" style="left:18px;top:35px;line-height:14px">2</div><div class="a mono" style="left:40px;top:35px;width:60px;text-align:right;line-height:14px">0.00</div><div class="a mono" style="left:90px;top:35px;width:60px;text-align:right;line-height:14px">25.27</div><div class="a mono" style="left:140px;top:35px;width:60px;text-align:right;line-height:14px">0.19</div><div class="a mono" style="left:190px;top:35px;width:60px;text-align:right;line-height:14px">8.80</div><svg class="a" style="left:4px;top:50px" width="13" height="15" viewBox="0 0 13 15"><rect x="3" y="0" width="7" height="3" fill="#000"/><path d="M6.5 3 C2 3 0 5.5 0 8.5 C0 12 3 14.5 6.5 14.5 C10 14.5 13 12 13 8.5 C13 5.5 11 3 6.5 3Z" fill="#000"/><circle cx="6.5" cy="8.5" r="2.2" fill="#bbb"/></svg><div class="a mono" style="left:18px;top:52px;line-height:14px">3</div><div class="a mono" style="left:40px;top:52px;width:60px;text-align:right;line-height:14px">0.00</div><div class="a mono" style="left:90px;top:52px;width:60px;text-align:right;line-height:14px">25.27</div><div class="a mono" style="left:140px;top:52px;width:60px;text-align:right;line-height:14px">0.19</div><div class="a mono" style="left:190px;top:52px;width:60px;text-align:right;line-height:14px">8.82</div><div class="a" style="left:18px;top:67px;width:265px;height:17px;background:#316AC5"></div><div class="a" style="left:3px;top:67px;width:15px;height:17px;background:#fff;border:1px dotted #000080"></div><div class="a" style="left:5px;top:67px;font-family:'Liberation Sans',sans-serif;font-size:17px;line-height:18px;color:#000">?</div><div class="a mono" style="left:18px;top:69px;line-height:14px;color:#fff">4</div><div class="a mono" style="left:40px;top:69px;width:60px;text-align:right;line-height:14px;color:#fff">0.00</div><div class="a mono" style="left:90px;top:69px;width:60px;text-align:right;line-height:14px;color:#fff">0.00</div><div class="a mono" style="left:140px;top:69px;width:60px;text-align:right;line-height:14px;color:#fff">0.00</div><div class="a mono" style="left:190px;top:69px;width:60px;text-align:right;line-height:14px;color:#fff">0.00</div>
      <!-- hscroll -->
      <div class="a" style="left:0;top:292px;width:284px;height:18px;background:linear-gradient(#F3F1EC,#FEFEFB)">
        <div class="a xsb" style="left:1px;top:1px;width:15px;height:16px"><svg class="a" style="left:4px;top:4px" width="7" height="8"><path d="M5 0.5 L1.5 4 L5 7.5" stroke="#4D6185" stroke-width="2" fill="none"/></svg></div>
        <div class="a xsb" style="left:18px;top:1px;width:46px;height:16px"><div class="a" style="left:18px;top:4px;width:9px;height:8px;background:repeating-linear-gradient(90deg,#fff 0 1px,#A8BEF5 1px 2px)"></div></div>
        <div class="a xsb" style="left:266px;top:1px;width:16px;height:16px"><svg class="a" style="left:5px;top:4px" width="7" height="8"><path d="M1.5 0.5 L5 4 L1.5 7.5" stroke="#4D6185" stroke-width="2" fill="none"/></svg></div>
      </div>
    </div>
    <!-- right pane -->
    <div class="a" id="rpane" style="left:291px;top:1px;width:272px;height:235px;background:#ECE9D8;border-left:1px solid #000;border-top:1px solid #000;overflow:hidden">
<div class="a" style="left:9px;top:8px;width:160px;height:17px;border-top:1px solid #fff;border-left:1px solid #fff;border-right:2px solid #716F64;border-radius:2px 2px 0 0"></div><div class="a" style="left:170px;top:8px;width:200px;height:17px;border-top:1px solid #fff;border-left:1px solid #fff;border-radius:2px 2px 0 0"></div><div class="a mono" style="left:31px;top:11px;line-height:14px;">Arca ranges average</div><div class="a mono" style="left:192px;top:11px;line-height:14px;">User defin</div><div class="a" style="left:9px;top:25px;width:67px;height:19px;border-top:1px solid #fff;border-left:1px solid #fff;border-right:2px solid #716F64;border-radius:2px 2px 0 0"></div><div class="a" style="left:77px;top:25px;width:60px;height:19px;border-top:1px solid #fff;border-left:1px solid #fff;border-radius:2px 2px 0 0"></div><div class="a" style="left:201px;top:25px;width:200px;height:19px;border-top:1px solid #fff;border-left:1px solid #fff;border-right:2px solid #716F64;border-radius:2px 2px 0 0"></div><div class="a" style="left:6px;top:43px;width:300px;height:200px;border-top:1px solid #fff;border-left:1px solid #fff"></div><div class="a" style="left:137px;top:23px;width:65px;height:22px;background:#ECE9D8;border-top:1px solid #fff;border-left:1px solid #fff;border-right:2px solid #716F64;border-radius:2px 2px 0 0"></div><div class="a mono" style="left:21px;top:28px;line-height:14px;">General</div><div class="a mono" style="left:89px;top:28px;line-height:14px;">System</div><div class="a mono" style="left:151px;top:26px;line-height:14px;">M-Info</div><div class="a mono" style="left:213px;top:28px;line-height:14px;">C-Info</div><div class="a mono" style="left:46px;top:51px;line-height:14px;">Measuring</div><div class="a" style="left:106px;top:48px;width:168px;height:18px;background:#ECE9D8;border-top:2px solid #ACA899;border-left:2px solid #ACA899;border-right:1px solid #fff;border-bottom:1px solid #fff;box-shadow:inset 1px 1px 0 #716F64"></div><div class="a mono" style="left:109px;top:51px;line-height:14px;color:#ACA899">To be set</div><div class="a" style="left:21px;top:71px;width:253px;height:74px;border:1px solid #ACA899;box-shadow:1px 1px 0 #fff inset,1px 1px 0 #fff"></div><div class="a mono" style="left:35px;top:79px;line-height:14px;">Dosing Vol.</div><div class="a" style="left:106px;top:76px;width:45px;height:17px;background:#ECE9D8;border-top:2px solid #ACA899;border-left:2px solid #ACA899;border-right:1px solid #fff;border-bottom:1px solid #fff;box-shadow:inset 1px 1px 0 #716F64"></div><div class="a mono" style="left:109px;top:79px;line-height:14px;color:#ACA899">0.0</div><div class="a mono" style="left:178px;top:79px;line-height:14px;">Dosing Rate</div><div class="a" style="left:251px;top:80px;width:1px;height:10px;background:#000"></div><div class="a mono" style="left:28px;top:98px;line-height:14px;">Temp. [° C]:</div><div class="a" style="left:106px;top:97px;width:45px;height:17px;background:#fff;border-top:2px solid #ACA899;border-left:2px solid #ACA899;border-right:1px solid #fff;border-bottom:1px solid #fff;box-shadow:inset 1px 1px 0 #716F64"></div><div class="a" style="left:108px;top:99px;width:25px;height:13px;background:#316AC5"></div><div class="a" style="left:133px;top:99px;width:1px;height:13px;background:#E08A00"></div><div class="a mono" style="left:109px;top:98px;line-height:14px;color:#fff">20.0</div><div class="a" style="left:154px;top:97px;width:14px;height:17px;border-top:1px solid #716F64;border-left:1px solid #716F64;border-right:1px solid #fff;border-bottom:1px solid #fff;box-shadow:inset 1px 1px 0 #ACA899;background:repeating-conic-gradient(#fff 0 25%,#ECE9D8 0 50%) 0 0/2px 2px"></div><div class="a mono" style="left:157px;top:98px;line-height:14px;">T</div><div class="a mono" style="left:207px;top:98px;line-height:14px;">Drop Age</div><div class="a mono" style="left:25px;top:122px;line-height:14px;">rel. Humidity</div><div class="a" style="left:106px;top:118px;width:45px;height:17px;background:#fff;border-top:2px solid #ACA899;border-left:2px solid #ACA899;border-right:1px solid #fff;border-bottom:1px solid #fff;box-shadow:inset 1px 1px 0 #716F64"></div><div class="a mono" style="left:109px;top:120px;line-height:14px;">0.0</div><div class="a" style="left:154px;top:118px;width:14px;height:17px;border-top:1px solid #716F64;border-left:1px solid #716F64;border-right:1px solid #fff;border-bottom:1px solid #fff;box-shadow:inset 1px 1px 0 #ACA899;background:repeating-conic-gradient(#fff 0 25%,#ECE9D8 0 50%) 0 0/2px 2px"></div><div class="a mono" style="left:157px;top:120px;line-height:14px;">H</div><div class="a" style="left:21px;top:151px;width:253px;height:28px;border:1px solid #ACA899;box-shadow:1px 1px 0 #fff inset,1px 1px 0 #fff"></div><div class="a mono" style="left:35px;top:160px;line-height:14px;">Ref. - Size</div><div class="a" style="left:106px;top:158px;width:45px;height:16px;background:#fff;border-top:2px solid #ACA899;border-left:2px solid #ACA899;border-right:1px solid #fff;border-bottom:1px solid #fff;box-shadow:inset 1px 1px 0 #716F64"></div><div class="a mono" style="left:109px;top:160px;line-height:14px;">1.2740</div><div class="a mono" style="left:237px;top:160px;line-height:14px;">Mag</div><div class="a" style="left:21px;top:184px;width:253px;height:96px;border:1px solid #ACA899;box-shadow:1px 1px 0 #fff inset,1px 1px 0 #fff"></div><div class="a mono" style="left:46px;top:193px;line-height:14px;">Measuring</div><div class="a" style="left:106px;top:191px;width:168px;height:16px;background:#fff;border-top:2px solid #ACA899;border-left:2px solid #ACA899;border-right:1px solid #fff;border-bottom:1px solid #fff;box-shadow:inset 1px 1px 0 #716F64"></div><div class="a" style="left:106px;top:212px;width:168px;height:18px;background:#fff;border-top:2px solid #ACA899;border-left:2px solid #ACA899;border-right:1px solid #fff;border-bottom:1px solid #fff;box-shadow:inset 1px 1px 0 #716F64"></div><div class="a" style="left:253px;top:0;width:20px;height:240px;background:#ECE9D8"></div><div class="a" style="left:254px;top:0;width:16px;height:216px;background:linear-gradient(90deg,#F3F1EC,#FEFEFB)"></div><div class="a xsb" style="left:254px;top:1px;width:15px;height:15px"><svg class="a" style="left:3px;top:4px" width="8" height="6"><path d="M0.5 5 L4 1.5 L7.5 5" stroke="#4D6185" stroke-width="2" fill="none"/></svg></div><div class="a xsb" style="left:254px;top:18px;width:15px;height:118px;background:linear-gradient(90deg,#D6E2FC,#C3D4FA 60%,#B4C8F7)"><div class="a" style="left:3px;top:55px;width:8px;height:8px;background:repeating-linear-gradient(180deg,#fff 0 1px,#A8BEF5 1px 2px)"></div></div><div class="a xsb" style="left:254px;top:199px;width:15px;height:16px"><svg class="a" style="left:3px;top:5px" width="8" height="6"><path d="M0.5 1 L4 4.5 L7.5 1" stroke="#4D6185" stroke-width="2" fill="none"/></svg></div><div class="a" style="left:0;top:216px;width:254px;height:16px;background:linear-gradient(#F3F1EC,#FEFEFB)"></div><div class="a xsb" style="left:0px;top:216px;width:16px;height:16px"><svg class="a" style="left:4px;top:3px" width="7" height="8"><path d="M5 0.5 L1.5 4 L5 7.5" stroke="#4D6185" stroke-width="2" fill="none"/></svg></div><div class="a xsb" style="left:17px;top:216px;width:162px;height:16px"><div class="a" style="left:77px;top:3px;width:9px;height:8px;background:repeating-linear-gradient(90deg,#fff 0 1px,#A8BEF5 1px 2px)"></div></div><div class="a xsb" style="left:236px;top:216px;width:16px;height:16px"><svg class="a" style="left:5px;top:3px" width="7" height="8"><path d="M1.5 0.5 L5 4 L1.5 7.5" stroke="#4D6185" stroke-width="2" fill="none"/></svg></div><div class="a" style="left:0;top:233px;width:272px;height:1px;background:#fff"></div>
    </div>
    <!-- plot -->
    <div class="a" style="left:291px;top:240px;width:272px;height:72px;background:#C0C0C0;border-left:1px solid #000;border-top:1px solid #000;overflow:hidden" id="plot">
<svg class="a" style="left:0;top:0" width="272" height="72" viewBox="826 479 272 72">
  <rect x="865" y="486" width="218" height="50" fill="#fff"/>
  <line x1="865" y1="486.5" x2="1083" y2="486.5" stroke="#808080" stroke-width="1" stroke-dasharray="14 8"/>
  <line x1="865" y1="536.5" x2="1083" y2="536.5" stroke="#808080" stroke-width="1" stroke-dasharray="14 8"/>
  <rect x="864" y="486" width="1" height="55" fill="#000"/>
  <rect x="860" y="486" width="5" height="1" fill="#000"/><rect x="860" y="496" width="5" height="1" fill="#000"/><rect x="860" y="506" width="5" height="1" fill="#000"/><rect x="860" y="516" width="5" height="1" fill="#000"/><rect x="860" y="526" width="5" height="1" fill="#000"/><rect x="860" y="536" width="5" height="1" fill="#000"/><rect x="886" y="532" width="1" height="9" fill="#000"/><rect x="907" y="532" width="1" height="9" fill="#000"/><rect x="929" y="532" width="1" height="9" fill="#000"/><rect x="951" y="532" width="1" height="9" fill="#000"/><rect x="973" y="532" width="1" height="9" fill="#000"/><rect x="995" y="532" width="1" height="9" fill="#000"/><rect x="1017" y="532" width="1" height="9" fill="#000"/><rect x="1038" y="532" width="1" height="9" fill="#000"/><rect x="1060" y="532" width="1" height="9" fill="#000"/><rect x="1082" y="532" width="1" height="9" fill="#000"/>
  <text x="859" y="489.5" font-family="Liberation Sans" font-size="9" text-anchor="end" fill="#000" letter-spacing="-0.5">0.5</text>
  <text x="859" y="539.5" font-family="Liberation Sans" font-size="9" text-anchor="end" fill="#000">0</text>
  <text x="864.5" y="548" font-family="Liberation Sans" font-size="9" text-anchor="middle" fill="#000">0</text>
  <text x="1083.5" y="548" font-family="Liberation Sans" font-size="9" text-anchor="middle" fill="#000">5</text>
  <text x="920" y="490.5" font-family="Liberation Sans" font-size="11" fill="#008000">Plot Presentation</text>
  <rect x="826" y="549" width="272" height="2" fill="#F4F2EA"/>
</svg>
    </div>
  </div>
</div>


<!-- MDI right edge -->
<div class="a" style="left:1278px;top:79px;width:2px;height:670px;background:#fff"></div>
<!-- logo -->
<svg class="a" style="left:1113px;top:712px" width="160" height="32" viewBox="1113 712 160 32">
  <defs>
    <clipPath id="ctop"><rect x="1113" y="712" width="160" height="15.3"/></clipPath>
    <clipPath id="cbot"><rect x="1113" y="727.3" width="160" height="17"/></clipPath>
  </defs>
  <rect x="1113" y="712" width="160" height="32" fill="#fff"/>
  <text x="1122.5" y="733.5" font-family="Liberation Sans" font-weight="bold" font-size="27" textLength="141" lengthAdjust="spacingAndGlyphs" fill="#C00000" clip-path="url(#ctop)">dataphysics</text>
  <text x="1122.5" y="733.5" font-family="Liberation Sans" font-weight="bold" font-size="27" textLength="141" lengthAdjust="spacingAndGlyphs" fill="#C4C4C4" clip-path="url(#cbot)">dataphysics</text>
  <rect x="1115.5" y="727" width="155" height="1" fill="#404040"/>
</svg>

<!-- Status bar -->
<div class="a" style="left:0;top:749px;width:1280px;height:22px;background:#ECE9D8;border-top:1px solid #fff">
  <div class="a mono" style="left:2px;top:5px;line-height:14px">For Help, press F1</div>
  <div class="a" style="left:1116px;top:3px;width:59px;height:17px;border-top:1px solid #ACA899;border-left:1px solid #ACA899;border-right:1px solid #fff;border-bottom:1px solid #fff"></div>
  <div class="a mono" style="left:1117px;top:5px;line-height:14px">512, 130</div>
  <div class="a" style="left:1178px;top:3px;width:36px;height:17px;border-top:1px solid #ACA899;border-left:1px solid #ACA899;border-right:1px solid #fff;border-bottom:1px solid #fff"></div>
  <div class="a mono" style="left:1179px;top:5px;line-height:14px">255</div>
  <div class="a" style="left:1216px;top:3px;width:12px;height:17px;border-top:1px solid #ACA899;border-left:1px solid #ACA899;border-right:1px solid #fff;border-bottom:1px solid #fff"></div>
  <div class="a mono" style="left:1217px;top:5px;line-height:14px">L</div>
  <div class="a" style="left:1230px;top:3px;width:50px;height:17px;border-top:1px solid #ACA899;border-left:1px solid #ACA899"></div>
  <div class="a" style="left:0;top:20px;width:93px;height:1px;background:#3C9A3C"></div>
  <div class="a" style="left:93px;top:20px;width:1187px;height:1px;background:#2A5CD8"></div>
</div>

</body></html>
